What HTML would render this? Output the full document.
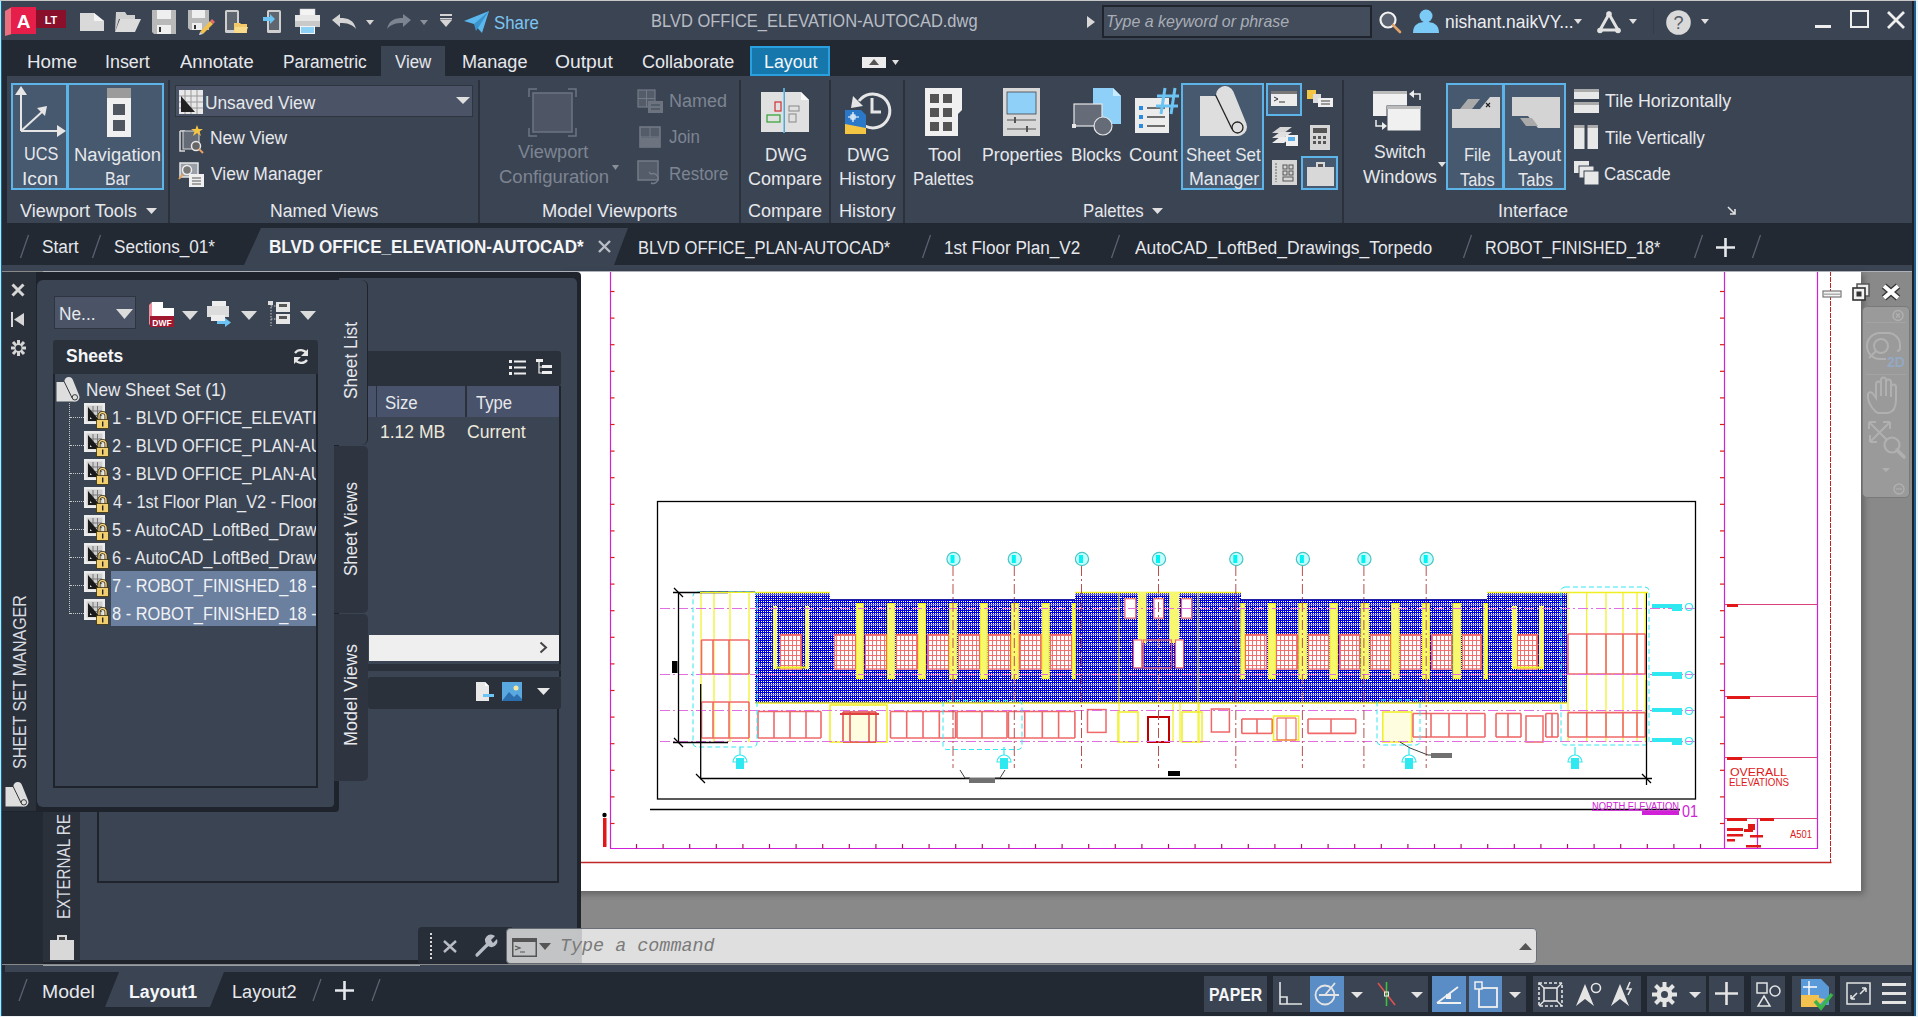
<!DOCTYPE html>
<html><head><meta charset="utf-8">
<style>
*{margin:0;padding:0;box-sizing:border-box}
html,body{width:1918px;height:1017px;overflow:hidden;background:#222933;font-family:"Liberation Sans",sans-serif;color:#eceef2}
.a{position:absolute}
.t{position:absolute;white-space:nowrap;transform-origin:0 0}
svg{overflow:visible}
</style></head><body>
<!-- p00_base -->
<div class="a" style="left:0px;top:0px;width:1918px;height:1017px;background:#222933;"></div>
<div class="a" style="left:0px;top:0px;width:1918px;height:1px;background:#c8c8c8;"></div>
<div class="a" style="left:2px;top:1px;width:1912px;height:39px;background:#3b4453;"></div>
<div class="a" style="left:2px;top:40px;width:1912px;height:36px;background:#222933;"></div>
<div class="a" style="left:7px;top:76px;width:1906px;height:147px;background:#3b4453;"></div>
<div class="a" style="left:2px;top:224px;width:1912px;height:41px;background:#222933;"></div>
<div class="a" style="left:2px;top:265px;width:1912px;height:6px;background:#3b4453;"></div>
<div class="a" style="left:2px;top:271px;width:1910px;height:694px;background:#898989;"></div>
<div class="a" style="left:560px;top:271px;width:1301px;height:620px;background:#fff;box-shadow:3px 3px 6px rgba(0,0,0,.28);"></div>
<div class="a" style="left:5px;top:965px;width:1907px;height:7px;background:#3b4453;"></div>
<div class="a" style="left:2px;top:972px;width:1912px;height:44px;background:#222933;"></div>
<div class="a" style="left:0px;top:1016px;width:1918px;height:1px;background:#eef2f4;"></div>
<div class="a" style="left:0px;top:1px;width:1px;height:1015px;background:#a8eefc;"></div>
<div class="a" style="left:1px;top:1px;width:1px;height:1015px;background:#1f5f8f;"></div>
<div class="a" style="left:1912px;top:1px;width:2px;height:1015px;background:#1c2129;"></div>
<div class="a" style="left:1914px;top:1px;width:2px;height:1015px;background:#1f5f8f;"></div>
<div class="a" style="left:1916px;top:0px;width:2px;height:1017px;background:#e8f4fa;"></div>
<!-- p05_drawing -->
<svg class="a" style="left:0;top:0" width="1918" height="1017" viewBox="0 0 1918 1017"><defs>
<pattern id="hatch" patternUnits="userSpaceOnUse" width="20" height="10"><rect width="20" height="10" fill="#0000d8"/><rect x="1" y="1" width="1" height="1" fill="#fff"/><rect x="1" y="3" width="1" height="1" fill="#fff"/><rect x="1" y="5" width="1" height="1" fill="#fff"/><rect x="1" y="7" width="1" height="1" fill="#fff"/><rect x="1" y="9" width="1" height="1" fill="#fff"/><rect x="3" y="1" width="1" height="1" fill="#fff"/><rect x="3" y="3" width="1" height="1" fill="#fff"/><rect x="3" y="5" width="1" height="1" fill="#fff"/><rect x="3" y="7" width="1" height="1" fill="#fff"/><rect x="3" y="9" width="1" height="1" fill="#fff"/><rect x="5" y="1" width="1" height="1" fill="#fff"/><rect x="5" y="3" width="1" height="1" fill="#fff"/><rect x="5" y="5" width="1" height="1" fill="#fff"/><rect x="5" y="7" width="1" height="1" fill="#fff"/><rect x="5" y="9" width="1" height="1" fill="#fff"/><rect x="7" y="1" width="1" height="1" fill="#fff"/><rect x="7" y="3" width="1" height="1" fill="#fff"/><rect x="7" y="5" width="1" height="1" fill="#fff"/><rect x="7" y="7" width="1" height="1" fill="#fff"/><rect x="7" y="9" width="1" height="1" fill="#fff"/><rect x="9" y="1" width="1" height="1" fill="#fff"/><rect x="9" y="3" width="1" height="1" fill="#fff"/><rect x="9" y="5" width="1" height="1" fill="#fff"/><rect x="9" y="7" width="1" height="1" fill="#fff"/><rect x="9" y="9" width="1" height="1" fill="#fff"/><rect x="11" y="1" width="1" height="1" fill="#fff"/><rect x="11" y="3" width="1" height="1" fill="#fff"/><rect x="11" y="5" width="1" height="1" fill="#fff"/><rect x="11" y="7" width="1" height="1" fill="#fff"/><rect x="11" y="9" width="1" height="1" fill="#fff"/><rect x="13" y="1" width="1" height="1" fill="#fff"/><rect x="13" y="3" width="1" height="1" fill="#fff"/><rect x="13" y="5" width="1" height="1" fill="#fff"/><rect x="13" y="7" width="1" height="1" fill="#fff"/><rect x="13" y="9" width="1" height="1" fill="#fff"/><rect x="15" y="1" width="1" height="1" fill="#fff"/><rect x="15" y="3" width="1" height="1" fill="#fff"/><rect x="15" y="5" width="1" height="1" fill="#fff"/><rect x="15" y="7" width="1" height="1" fill="#fff"/><rect x="15" y="9" width="1" height="1" fill="#fff"/><rect x="17" y="1" width="1" height="1" fill="#fff"/><rect x="17" y="3" width="1" height="1" fill="#fff"/><rect x="17" y="5" width="1" height="1" fill="#fff"/><rect x="17" y="7" width="1" height="1" fill="#fff"/><rect x="17" y="9" width="1" height="1" fill="#fff"/><rect x="19" y="1" width="1" height="1" fill="#fff"/><rect x="19" y="3" width="1" height="1" fill="#fff"/><rect x="19" y="5" width="1" height="1" fill="#fff"/><rect x="19" y="7" width="1" height="1" fill="#fff"/><rect x="19" y="9" width="1" height="1" fill="#fff"/><rect x="0" y="4" width="20" height="1" fill="#fff" opacity="0.45"/><rect x="9" y="1" width="2" height="1" fill="#fff"/><rect x="19" y="7" width="1" height="1" fill="#fff"/><rect x="0" y="7" width="1" height="1" fill="#fff"/></pattern>
<pattern id="grid" patternUnits="userSpaceOnUse" width="4" height="5"><rect width="4" height="5" fill="#fff"/><rect x="0" y="0" width="1" height="5" fill="#f07070"/><rect x="0" y="0" width="4" height="1" fill="#f07070"/></pattern>
<clipPath id="dclip"><rect x="2" y="271" width="1910" height="693"/></clipPath>
</defs><g clip-path="url(#dclip)"><line x1="610.5" y1="271" x2="610.5" y2="848.5" stroke="#d020d8" stroke-width="1.2"/>
<line x1="610" y1="848.5" x2="1818" y2="848.5" stroke="#d020d8" stroke-width="1.2"/>
<line x1="1724.5" y1="271" x2="1724.5" y2="848.5" stroke="#d020d8" stroke-width="1.2"/>
<line x1="1817.5" y1="271" x2="1817.5" y2="848.5" stroke="#d020d8" stroke-width="1.2"/>
<line x1="1830.5" y1="271" x2="1830.5" y2="862" stroke="#c82020" stroke-width="1" stroke-dasharray="5,1"/>
<line x1="581" y1="862.5" x2="1831.5" y2="862.5" stroke="#c02828" stroke-width="1.3"/>
<line x1="610.5" y1="291.5" x2="614.5" y2="291.5" stroke="#e01818" stroke-width="1.2"/>
<line x1="1720" y1="291.5" x2="1724.5" y2="291.5" stroke="#e01818" stroke-width="1.2"/>
<line x1="610.5" y1="318.1" x2="614.5" y2="318.1" stroke="#e01818" stroke-width="1.2"/>
<line x1="1720" y1="318.1" x2="1724.5" y2="318.1" stroke="#e01818" stroke-width="1.2"/>
<line x1="610.5" y1="344.7" x2="614.5" y2="344.7" stroke="#e01818" stroke-width="1.2"/>
<line x1="1720" y1="344.7" x2="1724.5" y2="344.7" stroke="#e01818" stroke-width="1.2"/>
<line x1="610.5" y1="371.3" x2="614.5" y2="371.3" stroke="#e01818" stroke-width="1.2"/>
<line x1="1720" y1="371.3" x2="1724.5" y2="371.3" stroke="#e01818" stroke-width="1.2"/>
<line x1="610.5" y1="397.9" x2="614.5" y2="397.9" stroke="#e01818" stroke-width="1.2"/>
<line x1="1720" y1="397.9" x2="1724.5" y2="397.9" stroke="#e01818" stroke-width="1.2"/>
<line x1="610.5" y1="424.5" x2="614.5" y2="424.5" stroke="#e01818" stroke-width="1.2"/>
<line x1="1720" y1="424.5" x2="1724.5" y2="424.5" stroke="#e01818" stroke-width="1.2"/>
<line x1="610.5" y1="451.1" x2="614.5" y2="451.1" stroke="#e01818" stroke-width="1.2"/>
<line x1="1720" y1="451.1" x2="1724.5" y2="451.1" stroke="#e01818" stroke-width="1.2"/>
<line x1="610.5" y1="477.70000000000005" x2="614.5" y2="477.70000000000005" stroke="#e01818" stroke-width="1.2"/>
<line x1="1720" y1="477.70000000000005" x2="1724.5" y2="477.70000000000005" stroke="#e01818" stroke-width="1.2"/>
<line x1="610.5" y1="504.3" x2="614.5" y2="504.3" stroke="#e01818" stroke-width="1.2"/>
<line x1="1720" y1="504.3" x2="1724.5" y2="504.3" stroke="#e01818" stroke-width="1.2"/>
<line x1="610.5" y1="530.9" x2="614.5" y2="530.9" stroke="#e01818" stroke-width="1.2"/>
<line x1="1720" y1="530.9" x2="1724.5" y2="530.9" stroke="#e01818" stroke-width="1.2"/>
<line x1="610.5" y1="557.5" x2="614.5" y2="557.5" stroke="#e01818" stroke-width="1.2"/>
<line x1="1720" y1="557.5" x2="1724.5" y2="557.5" stroke="#e01818" stroke-width="1.2"/>
<line x1="610.5" y1="584.1" x2="614.5" y2="584.1" stroke="#e01818" stroke-width="1.2"/>
<line x1="1720" y1="584.1" x2="1724.5" y2="584.1" stroke="#e01818" stroke-width="1.2"/>
<line x1="610.5" y1="610.7" x2="614.5" y2="610.7" stroke="#e01818" stroke-width="1.2"/>
<line x1="1720" y1="610.7" x2="1724.5" y2="610.7" stroke="#e01818" stroke-width="1.2"/>
<line x1="610.5" y1="637.3" x2="614.5" y2="637.3" stroke="#e01818" stroke-width="1.2"/>
<line x1="1720" y1="637.3" x2="1724.5" y2="637.3" stroke="#e01818" stroke-width="1.2"/>
<line x1="610.5" y1="663.9000000000001" x2="614.5" y2="663.9000000000001" stroke="#e01818" stroke-width="1.2"/>
<line x1="1720" y1="663.9000000000001" x2="1724.5" y2="663.9000000000001" stroke="#e01818" stroke-width="1.2"/>
<line x1="610.5" y1="690.5" x2="614.5" y2="690.5" stroke="#e01818" stroke-width="1.2"/>
<line x1="1720" y1="690.5" x2="1724.5" y2="690.5" stroke="#e01818" stroke-width="1.2"/>
<line x1="610.5" y1="717.1" x2="614.5" y2="717.1" stroke="#e01818" stroke-width="1.2"/>
<line x1="1720" y1="717.1" x2="1724.5" y2="717.1" stroke="#e01818" stroke-width="1.2"/>
<line x1="610.5" y1="743.7" x2="614.5" y2="743.7" stroke="#e01818" stroke-width="1.2"/>
<line x1="1720" y1="743.7" x2="1724.5" y2="743.7" stroke="#e01818" stroke-width="1.2"/>
<line x1="610.5" y1="770.3" x2="614.5" y2="770.3" stroke="#e01818" stroke-width="1.2"/>
<line x1="1720" y1="770.3" x2="1724.5" y2="770.3" stroke="#e01818" stroke-width="1.2"/>
<line x1="610.5" y1="796.9000000000001" x2="614.5" y2="796.9000000000001" stroke="#e01818" stroke-width="1.2"/>
<line x1="1720" y1="796.9000000000001" x2="1724.5" y2="796.9000000000001" stroke="#e01818" stroke-width="1.2"/>
<line x1="610.5" y1="823.5" x2="614.5" y2="823.5" stroke="#e01818" stroke-width="1.2"/>
<line x1="1720" y1="823.5" x2="1724.5" y2="823.5" stroke="#e01818" stroke-width="1.2"/>
<line x1="636.5" y1="844" x2="636.5" y2="848.5" stroke="#b01060" stroke-width="1.2"/>
<line x1="663.1" y1="844" x2="663.1" y2="848.5" stroke="#b01060" stroke-width="1.2"/>
<line x1="689.7" y1="844" x2="689.7" y2="848.5" stroke="#b01060" stroke-width="1.2"/>
<line x1="716.3" y1="844" x2="716.3" y2="848.5" stroke="#b01060" stroke-width="1.2"/>
<line x1="742.9" y1="844" x2="742.9" y2="848.5" stroke="#b01060" stroke-width="1.2"/>
<line x1="769.5" y1="844" x2="769.5" y2="848.5" stroke="#b01060" stroke-width="1.2"/>
<line x1="796.1" y1="844" x2="796.1" y2="848.5" stroke="#b01060" stroke-width="1.2"/>
<line x1="822.7" y1="844" x2="822.7" y2="848.5" stroke="#b01060" stroke-width="1.2"/>
<line x1="849.3" y1="844" x2="849.3" y2="848.5" stroke="#b01060" stroke-width="1.2"/>
<line x1="875.9" y1="844" x2="875.9" y2="848.5" stroke="#b01060" stroke-width="1.2"/>
<line x1="902.5" y1="844" x2="902.5" y2="848.5" stroke="#b01060" stroke-width="1.2"/>
<line x1="929.1" y1="844" x2="929.1" y2="848.5" stroke="#b01060" stroke-width="1.2"/>
<line x1="955.7" y1="844" x2="955.7" y2="848.5" stroke="#b01060" stroke-width="1.2"/>
<line x1="982.3" y1="844" x2="982.3" y2="848.5" stroke="#b01060" stroke-width="1.2"/>
<line x1="1008.9000000000001" y1="844" x2="1008.9000000000001" y2="848.5" stroke="#b01060" stroke-width="1.2"/>
<line x1="1035.5" y1="844" x2="1035.5" y2="848.5" stroke="#b01060" stroke-width="1.2"/>
<line x1="1062.1" y1="844" x2="1062.1" y2="848.5" stroke="#b01060" stroke-width="1.2"/>
<line x1="1088.7" y1="844" x2="1088.7" y2="848.5" stroke="#b01060" stroke-width="1.2"/>
<line x1="1115.3" y1="844" x2="1115.3" y2="848.5" stroke="#b01060" stroke-width="1.2"/>
<line x1="1141.9" y1="844" x2="1141.9" y2="848.5" stroke="#b01060" stroke-width="1.2"/>
<line x1="1168.5" y1="844" x2="1168.5" y2="848.5" stroke="#b01060" stroke-width="1.2"/>
<line x1="1195.1" y1="844" x2="1195.1" y2="848.5" stroke="#b01060" stroke-width="1.2"/>
<line x1="1221.7" y1="844" x2="1221.7" y2="848.5" stroke="#b01060" stroke-width="1.2"/>
<line x1="1248.3000000000002" y1="844" x2="1248.3000000000002" y2="848.5" stroke="#b01060" stroke-width="1.2"/>
<line x1="1274.9" y1="844" x2="1274.9" y2="848.5" stroke="#b01060" stroke-width="1.2"/>
<line x1="1301.5" y1="844" x2="1301.5" y2="848.5" stroke="#b01060" stroke-width="1.2"/>
<line x1="1328.1" y1="844" x2="1328.1" y2="848.5" stroke="#b01060" stroke-width="1.2"/>
<line x1="1354.7" y1="844" x2="1354.7" y2="848.5" stroke="#b01060" stroke-width="1.2"/>
<line x1="1381.3000000000002" y1="844" x2="1381.3000000000002" y2="848.5" stroke="#b01060" stroke-width="1.2"/>
<line x1="1407.9" y1="844" x2="1407.9" y2="848.5" stroke="#b01060" stroke-width="1.2"/>
<line x1="1434.5" y1="844" x2="1434.5" y2="848.5" stroke="#b01060" stroke-width="1.2"/>
<line x1="1461.1" y1="844" x2="1461.1" y2="848.5" stroke="#b01060" stroke-width="1.2"/>
<line x1="1487.7" y1="844" x2="1487.7" y2="848.5" stroke="#b01060" stroke-width="1.2"/>
<line x1="1514.3000000000002" y1="844" x2="1514.3000000000002" y2="848.5" stroke="#b01060" stroke-width="1.2"/>
<line x1="1540.9" y1="844" x2="1540.9" y2="848.5" stroke="#b01060" stroke-width="1.2"/>
<line x1="1567.5" y1="844" x2="1567.5" y2="848.5" stroke="#b01060" stroke-width="1.2"/>
<line x1="1594.1" y1="844" x2="1594.1" y2="848.5" stroke="#b01060" stroke-width="1.2"/>
<line x1="1620.7" y1="844" x2="1620.7" y2="848.5" stroke="#b01060" stroke-width="1.2"/>
<line x1="1647.3000000000002" y1="844" x2="1647.3000000000002" y2="848.5" stroke="#b01060" stroke-width="1.2"/>
<line x1="1673.9" y1="844" x2="1673.9" y2="848.5" stroke="#b01060" stroke-width="1.2"/>
<line x1="1700.5" y1="844" x2="1700.5" y2="848.5" stroke="#b01060" stroke-width="1.2"/>
<line x1="1724.5" y1="604.5" x2="1817.5" y2="604.5" stroke="#d84080" stroke-width="1.2"/>
<line x1="1724.5" y1="696.5" x2="1817.5" y2="696.5" stroke="#d84080" stroke-width="1.2"/>
<line x1="1724.5" y1="757.5" x2="1817.5" y2="757.5" stroke="#d84080" stroke-width="1.2"/>
<line x1="1724.5" y1="818.5" x2="1817.5" y2="818.5" stroke="#d84080" stroke-width="1.2"/>
<rect x="1727" y="604" width="11" height="3" fill="#e01818" />
<rect x="1727" y="696" width="23" height="3" fill="#e01818" />
<rect x="1727" y="757" width="15" height="3" fill="#e01818" />
<rect x="1727" y="818" width="20" height="3" fill="#e01818" />
<rect x="1760" y="818" width="14" height="3" fill="#e01818" />
<line x1="1757.5" y1="818.5" x2="1757.5" y2="848.5" stroke="#d020d8" stroke-width="1.2"/>
<rect x="1748" y="824" width="7" height="6" fill="#e01818" />
<rect x="1727" y="828" width="16" height="3" fill="#e01818" />
<rect x="1744" y="829" width="9" height="3" fill="#e01818" />
<rect x="1727" y="834" width="16" height="2.5" fill="#e01818" />
<rect x="1750" y="835" width="13" height="2.5" fill="#e01818" />
<rect x="1727" y="839" width="8" height="2.5" fill="#e01818" />
<rect x="1746" y="845" width="15" height="2.5" fill="#e01818" />
<text x="1730" y="775.5" font-family="Liberation Sans" font-size="10.5" fill="#e01818" textLength="57" lengthAdjust="spacingAndGlyphs">OVERALL</text>
<text x="1729" y="785.5" font-family="Liberation Sans" font-size="10.5" fill="#e01818" textLength="60" lengthAdjust="spacingAndGlyphs">ELEVATIONS</text>
<text x="1790" y="838" font-family="Liberation Sans" font-size="10" fill="#e01818" textLength="22" lengthAdjust="spacingAndGlyphs">A501</text>
<rect x="603" y="818" width="3.5" height="29" fill="#e01818" />
<circle cx="604.5" cy="815" r="2.2" fill="#000"/>
<rect x="657.5" y="501.5" width="1038" height="297.5" fill="none" stroke="#000" stroke-width="1.3" />
<line x1="650" y1="809.5" x2="1680" y2="809.5" stroke="#000" stroke-width="1.3"/>
<text x="1592" y="810" font-family="Liberation Sans" font-size="10" fill="#d020d8" textLength="87" lengthAdjust="spacingAndGlyphs">NORTH ELEVATION</text>
<line x1="1592" y1="810.5" x2="1680" y2="810.5" stroke="#d020d8" stroke-width="0.8"/>
<rect x="1642" y="811" width="37" height="4" fill="#d020d8" />
<text x="1682" y="817" font-family="Liberation Sans" font-size="16" fill="#d020d8" textLength="16" lengthAdjust="spacingAndGlyphs">01</text>
<rect x="700.5" y="592" width="55" height="150" fill="#fff" />
<rect x="1567" y="592" width="81" height="150" fill="#fff" />
<rect x="755" y="703" width="812" height="39" fill="#fff" />
<rect x="755" y="592" width="75" height="111" fill="url(#hatch)" />
<rect x="830" y="599" width="245" height="104" fill="url(#hatch)" />
<rect x="1075" y="592" width="166" height="111" fill="url(#hatch)" />
<rect x="1241" y="599" width="246" height="104" fill="url(#hatch)" />
<rect x="1487" y="592" width="80" height="111" fill="url(#hatch)" />
<line x1="755" y1="592.5" x2="830" y2="592.5" stroke="#f0f020" stroke-width="1.5"/>
<line x1="1075" y1="592.5" x2="1241" y2="592.5" stroke="#f0f020" stroke-width="1.5"/>
<line x1="1487" y1="592.5" x2="1567" y2="592.5" stroke="#f0f020" stroke-width="1.5"/>
<line x1="830" y1="599.5" x2="1075" y2="599.5" stroke="#2020a0" stroke-width="1.2"/>
<line x1="1241" y1="599.5" x2="1487" y2="599.5" stroke="#2020a0" stroke-width="1.2"/>
<line x1="755" y1="703" x2="1567" y2="703" stroke="#f0f020" stroke-width="1.5"/>
<rect x="834" y="634" width="22" height="35.5" fill="#fff" />
<rect x="834" y="634" width="22" height="35.5" fill="url(#grid)"/>
<rect x="834.5" y="634.5" width="21" height="34.5" fill="none" stroke="#f06868" stroke-width="1.2" />
<rect x="865" y="634" width="22" height="35.5" fill="#fff" />
<rect x="865" y="634" width="22" height="35.5" fill="url(#grid)"/>
<rect x="865.5" y="634.5" width="21" height="34.5" fill="none" stroke="#f06868" stroke-width="1.2" />
<rect x="896" y="634" width="22" height="35.5" fill="#fff" />
<rect x="896" y="634" width="22" height="35.5" fill="url(#grid)"/>
<rect x="896.5" y="634.5" width="21" height="34.5" fill="none" stroke="#f06868" stroke-width="1.2" />
<rect x="927" y="634" width="22" height="35.5" fill="#fff" />
<rect x="927" y="634" width="22" height="35.5" fill="url(#grid)"/>
<rect x="927.5" y="634.5" width="21" height="34.5" fill="none" stroke="#f06868" stroke-width="1.2" />
<rect x="958" y="634" width="22" height="35.5" fill="#fff" />
<rect x="958" y="634" width="22" height="35.5" fill="url(#grid)"/>
<rect x="958.5" y="634.5" width="21" height="34.5" fill="none" stroke="#f06868" stroke-width="1.2" />
<rect x="988" y="634" width="23" height="35.5" fill="#fff" />
<rect x="988" y="634" width="23" height="35.5" fill="url(#grid)"/>
<rect x="988.5" y="634.5" width="22" height="34.5" fill="none" stroke="#f06868" stroke-width="1.2" />
<rect x="1019" y="634" width="23" height="35.5" fill="#fff" />
<rect x="1019" y="634" width="23" height="35.5" fill="url(#grid)"/>
<rect x="1019.5" y="634.5" width="22" height="34.5" fill="none" stroke="#f06868" stroke-width="1.2" />
<rect x="1050" y="634" width="22" height="35.5" fill="#fff" />
<rect x="1050" y="634" width="22" height="35.5" fill="url(#grid)"/>
<rect x="1050.5" y="634.5" width="21" height="34.5" fill="none" stroke="#f06868" stroke-width="1.2" />
<rect x="1245" y="634" width="22" height="35.5" fill="#fff" />
<rect x="1245" y="634" width="22" height="35.5" fill="url(#grid)"/>
<rect x="1245.5" y="634.5" width="21" height="34.5" fill="none" stroke="#f06868" stroke-width="1.2" />
<rect x="1276" y="634" width="22" height="35.5" fill="#fff" />
<rect x="1276" y="634" width="22" height="35.5" fill="url(#grid)"/>
<rect x="1276.5" y="634.5" width="21" height="34.5" fill="none" stroke="#f06868" stroke-width="1.2" />
<rect x="1308" y="634" width="21" height="35.5" fill="#fff" />
<rect x="1308" y="634" width="21" height="35.5" fill="url(#grid)"/>
<rect x="1308.5" y="634.5" width="20" height="34.5" fill="none" stroke="#f06868" stroke-width="1.2" />
<rect x="1339" y="634" width="21" height="35.5" fill="#fff" />
<rect x="1339" y="634" width="21" height="35.5" fill="url(#grid)"/>
<rect x="1339.5" y="634.5" width="20" height="34.5" fill="none" stroke="#f06868" stroke-width="1.2" />
<rect x="1370" y="634" width="21" height="35.5" fill="#fff" />
<rect x="1370" y="634" width="21" height="35.5" fill="url(#grid)"/>
<rect x="1370.5" y="634.5" width="20" height="34.5" fill="none" stroke="#f06868" stroke-width="1.2" />
<rect x="1400" y="634" width="21" height="35.5" fill="#fff" />
<rect x="1400" y="634" width="21" height="35.5" fill="url(#grid)"/>
<rect x="1400.5" y="634.5" width="20" height="34.5" fill="none" stroke="#f06868" stroke-width="1.2" />
<rect x="1431" y="634" width="21" height="35.5" fill="#fff" />
<rect x="1431" y="634" width="21" height="35.5" fill="url(#grid)"/>
<rect x="1431.5" y="634.5" width="20" height="34.5" fill="none" stroke="#f06868" stroke-width="1.2" />
<rect x="1462" y="634" width="20" height="35.5" fill="#fff" />
<rect x="1462" y="634" width="20" height="35.5" fill="url(#grid)"/>
<rect x="1462.5" y="634.5" width="19" height="34.5" fill="none" stroke="#f06868" stroke-width="1.2" />
<rect x="780" y="634" width="22" height="35.5" fill="#fff" />
<rect x="780" y="634" width="22" height="35.5" fill="url(#grid)"/>
<rect x="780.5" y="634.5" width="21" height="34.5" fill="none" stroke="#f06868" stroke-width="1.2" />
<rect x="1517" y="634" width="21" height="35.5" fill="#fff" />
<rect x="1517" y="634" width="21" height="35.5" fill="url(#grid)"/>
<rect x="1517.5" y="634.5" width="20" height="34.5" fill="none" stroke="#f06868" stroke-width="1.2" />
<rect x="856" y="603" width="7.5" height="76" fill="#f8f870" />
<rect x="856.5" y="603.5" width="6.5" height="75" fill="none" stroke="#f0f020" stroke-width="1" />
<rect x="887" y="603" width="8" height="76" fill="#f8f870" />
<rect x="887.5" y="603.5" width="7" height="75" fill="none" stroke="#f0f020" stroke-width="1" />
<rect x="918" y="603" width="8" height="76" fill="#f8f870" />
<rect x="918.5" y="603.5" width="7" height="75" fill="none" stroke="#f0f020" stroke-width="1" />
<rect x="949.3" y="603" width="7.7000000000000455" height="76" fill="#f8f870" />
<rect x="949.8" y="603.5" width="6.7000000000000455" height="75" fill="none" stroke="#f0f020" stroke-width="1" />
<rect x="980" y="603" width="7.5" height="76" fill="#f8f870" />
<rect x="980.5" y="603.5" width="6.5" height="75" fill="none" stroke="#f0f020" stroke-width="1" />
<rect x="1011" y="603" width="7.7000000000000455" height="76" fill="#f8f870" />
<rect x="1011.5" y="603.5" width="6.7000000000000455" height="75" fill="none" stroke="#f0f020" stroke-width="1" />
<rect x="1041.8" y="603" width="7.600000000000136" height="76" fill="#f8f870" />
<rect x="1042.3" y="603.5" width="6.600000000000136" height="75" fill="none" stroke="#f0f020" stroke-width="1" />
<rect x="1072" y="603" width="3.5" height="76" fill="#f8f870" />
<rect x="1072.5" y="603.5" width="2.5" height="75" fill="none" stroke="#f0f020" stroke-width="1" />
<rect x="1268" y="603" width="8" height="76" fill="#f8f870" />
<rect x="1268.5" y="603.5" width="7" height="75" fill="none" stroke="#f0f020" stroke-width="1" />
<rect x="1298.5" y="603" width="8.5" height="76" fill="#f8f870" />
<rect x="1299.0" y="603.5" width="7.5" height="75" fill="none" stroke="#f0f020" stroke-width="1" />
<rect x="1329.7" y="603" width="8.0" height="76" fill="#f8f870" />
<rect x="1330.2" y="603.5" width="7.0" height="75" fill="none" stroke="#f0f020" stroke-width="1" />
<rect x="1360.7" y="603" width="8.299999999999955" height="76" fill="#f8f870" />
<rect x="1361.2" y="603.5" width="7.2999999999999545" height="75" fill="none" stroke="#f0f020" stroke-width="1" />
<rect x="1391" y="603" width="8.299999999999955" height="76" fill="#f8f870" />
<rect x="1391.5" y="603.5" width="7.2999999999999545" height="75" fill="none" stroke="#f0f020" stroke-width="1" />
<rect x="1422" y="603" width="7.7000000000000455" height="76" fill="#f8f870" />
<rect x="1422.5" y="603.5" width="6.7000000000000455" height="75" fill="none" stroke="#f0f020" stroke-width="1" />
<rect x="1452.7" y="603" width="8.299999999999955" height="76" fill="#f8f870" />
<rect x="1453.2" y="603.5" width="7.2999999999999545" height="75" fill="none" stroke="#f0f020" stroke-width="1" />
<rect x="1483.6" y="603" width="4.400000000000091" height="76" fill="#f8f870" />
<rect x="1484.1" y="603.5" width="3.400000000000091" height="75" fill="none" stroke="#f0f020" stroke-width="1" />
<rect x="1240.5" y="603" width="4.5" height="76" fill="#f8f870" />
<rect x="1241.0" y="603.5" width="3.5" height="75" fill="none" stroke="#f0f020" stroke-width="1" />
<rect x="773" y="606" width="4" height="63" fill="#f8f870" />
<rect x="805" y="606" width="4" height="63" fill="#f8f870" />
<rect x="1512" y="606" width="5" height="63" fill="#f8f870" />
<rect x="1539" y="606" width="5" height="63" fill="#f8f870" />
<line x1="776" y1="667.5" x2="806" y2="667.5" stroke="#f0f020" stroke-width="2"/>
<line x1="1513" y1="667.5" x2="1543" y2="667.5" stroke="#f0f020" stroke-width="2"/>
<rect x="1124.4" y="598.2" width="11.799999999999955" height="20.4" fill="#fff" />
<rect x="1124.9" y="598.7" width="10.799999999999955" height="19.4" fill="none" stroke="#f06868" stroke-width="1.2" />
<rect x="1153.4" y="598.2" width="10.599999999999909" height="20.4" fill="#fff" />
<rect x="1153.9" y="598.7" width="9.599999999999909" height="19.4" fill="none" stroke="#f06868" stroke-width="1.2" />
<rect x="1181" y="598.2" width="11.200000000000045" height="20.4" fill="#fff" />
<rect x="1181.5" y="598.7" width="10.200000000000045" height="19.4" fill="none" stroke="#f06868" stroke-width="1.2" />
<rect x="1138" y="592" width="8.5" height="51" fill="#f8f870" />
<rect x="1169.3" y="592" width="9.900000000000091" height="51" fill="#f8f870" />
<rect x="1133" y="639.5" width="9.3" height="28.8" fill="#fff" />
<rect x="1133.5" y="640" width="8.3" height="27.8" fill="none" stroke="#f06868" stroke-width="1.2" />
<rect x="1175" y="639.5" width="9" height="28.8" fill="#fff" />
<rect x="1175.5" y="640" width="8" height="27.8" fill="none" stroke="#f06868" stroke-width="1.2" />
<rect x="1143.5" y="640" width="28" height="28" fill="none" stroke="#f06868" stroke-width="1.2" />
<line x1="701" y1="592" x2="701" y2="742" stroke="#f0f020" stroke-width="1.2"/>
<line x1="714" y1="592" x2="714" y2="742" stroke="#f0f020" stroke-width="1.2"/>
<line x1="730" y1="592" x2="730" y2="742" stroke="#f0f020" stroke-width="1.2"/>
<line x1="749" y1="592" x2="749" y2="742" stroke="#f0f020" stroke-width="1.2"/>
<line x1="701.5" y1="640" x2="749" y2="640" stroke="#f06868" stroke-width="1.6"/>
<line x1="701.5" y1="674" x2="749" y2="674" stroke="#f06868" stroke-width="1.6"/>
<line x1="701.5" y1="640" x2="701.5" y2="674" stroke="#f06868" stroke-width="1.6"/>
<line x1="713" y1="640" x2="713" y2="674" stroke="#f06868" stroke-width="1.6"/>
<line x1="729" y1="640" x2="729" y2="674" stroke="#f06868" stroke-width="1.6"/>
<line x1="749" y1="640" x2="749" y2="674" stroke="#f06868" stroke-width="1.6"/>
<line x1="701.5" y1="702" x2="749" y2="702" stroke="#f06868" stroke-width="1.6"/>
<line x1="701.5" y1="738" x2="749" y2="738" stroke="#f06868" stroke-width="1.6"/>
<line x1="701.5" y1="702" x2="701.5" y2="738" stroke="#f06868" stroke-width="1.6"/>
<line x1="713" y1="702" x2="713" y2="738" stroke="#f06868" stroke-width="1.6"/>
<line x1="729" y1="702" x2="729" y2="738" stroke="#f06868" stroke-width="1.6"/>
<line x1="749" y1="702" x2="749" y2="738" stroke="#f06868" stroke-width="1.6"/>
<line x1="700" y1="592" x2="755" y2="592" stroke="#202020" stroke-width="1"/>
<line x1="1568" y1="592" x2="1568" y2="742" stroke="#f0f020" stroke-width="1.2"/>
<line x1="1586.7" y1="592" x2="1586.7" y2="742" stroke="#f0f020" stroke-width="1.2"/>
<line x1="1606" y1="592" x2="1606" y2="742" stroke="#f0f020" stroke-width="1.2"/>
<line x1="1623" y1="592" x2="1623" y2="742" stroke="#f0f020" stroke-width="1.2"/>
<line x1="1637" y1="592" x2="1637" y2="742" stroke="#f0f020" stroke-width="1.2"/>
<line x1="1645.3" y1="592" x2="1645.3" y2="742" stroke="#f0f020" stroke-width="1.2"/>
<line x1="1568" y1="634" x2="1645.3" y2="634" stroke="#f06868" stroke-width="1.6"/>
<line x1="1568" y1="674" x2="1645.3" y2="674" stroke="#f06868" stroke-width="1.6"/>
<line x1="1568" y1="634" x2="1568" y2="674" stroke="#f06868" stroke-width="1.6"/>
<line x1="1586.7" y1="634" x2="1586.7" y2="674" stroke="#f06868" stroke-width="1.6"/>
<line x1="1606" y1="634" x2="1606" y2="674" stroke="#f06868" stroke-width="1.6"/>
<line x1="1623" y1="634" x2="1623" y2="674" stroke="#f06868" stroke-width="1.6"/>
<line x1="1637" y1="634" x2="1637" y2="674" stroke="#f06868" stroke-width="1.6"/>
<line x1="1645.3" y1="634" x2="1645.3" y2="674" stroke="#f06868" stroke-width="1.6"/>
<line x1="1568" y1="712.6" x2="1645.3" y2="712.6" stroke="#f06868" stroke-width="1.6"/>
<line x1="1568" y1="737" x2="1645.3" y2="737" stroke="#f06868" stroke-width="1.6"/>
<line x1="1568" y1="712.6" x2="1568" y2="737" stroke="#f06868" stroke-width="1.6"/>
<line x1="1586.7" y1="712.6" x2="1586.7" y2="737" stroke="#f06868" stroke-width="1.6"/>
<line x1="1606" y1="712.6" x2="1606" y2="737" stroke="#f06868" stroke-width="1.6"/>
<line x1="1623" y1="712.6" x2="1623" y2="737" stroke="#f06868" stroke-width="1.6"/>
<line x1="1637" y1="712.6" x2="1637" y2="737" stroke="#f06868" stroke-width="1.6"/>
<line x1="1645.3" y1="712.6" x2="1645.3" y2="737" stroke="#f06868" stroke-width="1.6"/>
<line x1="758" y1="711.5" x2="821" y2="711.5" stroke="#f06868" stroke-width="1.6"/>
<line x1="758" y1="738" x2="821" y2="738" stroke="#f06868" stroke-width="1.6"/>
<line x1="758" y1="711.5" x2="758" y2="738" stroke="#f06868" stroke-width="1.6"/>
<line x1="774" y1="711.5" x2="774" y2="738" stroke="#f06868" stroke-width="1.6"/>
<line x1="790" y1="711.5" x2="790" y2="738" stroke="#f06868" stroke-width="1.6"/>
<line x1="806" y1="711.5" x2="806" y2="738" stroke="#f06868" stroke-width="1.6"/>
<line x1="821" y1="711.5" x2="821" y2="738" stroke="#f06868" stroke-width="1.6"/>
<rect x="830" y="705" width="57" height="37" fill="none" stroke="#f0f020" stroke-width="1.5" />
<rect x="843" y="712" width="33" height="30" fill="#fffde0" />
<line x1="843" y1="712" x2="876" y2="712" stroke="#e04040" stroke-width="1.4"/>
<line x1="843" y1="742" x2="876" y2="742" stroke="#e04040" stroke-width="1.4"/>
<line x1="843" y1="712" x2="843" y2="742" stroke="#e04040" stroke-width="1.4"/>
<line x1="850" y1="712" x2="850" y2="742" stroke="#e04040" stroke-width="1.4"/>
<line x1="869" y1="712" x2="869" y2="742" stroke="#e04040" stroke-width="1.4"/>
<line x1="876" y1="712" x2="876" y2="742" stroke="#e04040" stroke-width="1.4"/>
<line x1="840" y1="714" x2="879" y2="714" stroke="#e04040" stroke-width="2"/>
<line x1="890.5" y1="711.5" x2="955.6" y2="711.5" stroke="#f06868" stroke-width="1.6"/>
<line x1="890.5" y1="738" x2="955.6" y2="738" stroke="#f06868" stroke-width="1.6"/>
<line x1="890.5" y1="711.5" x2="890.5" y2="738" stroke="#f06868" stroke-width="1.6"/>
<line x1="906.7" y1="711.5" x2="906.7" y2="738" stroke="#f06868" stroke-width="1.6"/>
<line x1="923" y1="711.5" x2="923" y2="738" stroke="#f06868" stroke-width="1.6"/>
<line x1="939.3" y1="711.5" x2="939.3" y2="738" stroke="#f06868" stroke-width="1.6"/>
<line x1="955.6" y1="711.5" x2="955.6" y2="738" stroke="#f06868" stroke-width="1.6"/>
<line x1="957" y1="711.5" x2="1007" y2="711.5" stroke="#f06868" stroke-width="1.6"/>
<line x1="957" y1="738" x2="1007" y2="738" stroke="#f06868" stroke-width="1.6"/>
<line x1="957" y1="711.5" x2="957" y2="738" stroke="#f06868" stroke-width="1.6"/>
<line x1="982" y1="711.5" x2="982" y2="738" stroke="#f06868" stroke-width="1.6"/>
<line x1="1007" y1="711.5" x2="1007" y2="738" stroke="#f06868" stroke-width="1.6"/>
<line x1="1008.4" y1="711.5" x2="1074.9" y2="711.5" stroke="#f06868" stroke-width="1.6"/>
<line x1="1008.4" y1="738" x2="1074.9" y2="738" stroke="#f06868" stroke-width="1.6"/>
<line x1="1008.4" y1="711.5" x2="1008.4" y2="738" stroke="#f06868" stroke-width="1.6"/>
<line x1="1024.7" y1="711.5" x2="1024.7" y2="738" stroke="#f06868" stroke-width="1.6"/>
<line x1="1042.3" y1="711.5" x2="1042.3" y2="738" stroke="#f06868" stroke-width="1.6"/>
<line x1="1058.6" y1="711.5" x2="1058.6" y2="738" stroke="#f06868" stroke-width="1.6"/>
<line x1="1074.9" y1="711.5" x2="1074.9" y2="738" stroke="#f06868" stroke-width="1.6"/>
<rect x="1087.5" y="709.6" width="18.5" height="22.8" fill="none" stroke="#f06868" stroke-width="1.5" />
<rect x="1118" y="712" width="20" height="30" fill="none" stroke="#f0f020" stroke-width="1.5" />
<rect x="1182" y="712" width="20" height="30" fill="none" stroke="#f0f020" stroke-width="1.5" />
<rect x="1148" y="717" width="21" height="25" fill="none" stroke="#c00000" stroke-width="2" />
<rect x="1211.4" y="709" width="18" height="23" fill="none" stroke="#f06868" stroke-width="1.5" />
<line x1="1173" y1="703" x2="1173" y2="742" stroke="#f0f020" stroke-width="1.2"/>
<line x1="1180" y1="703" x2="1180" y2="742" stroke="#f0f020" stroke-width="1.2"/>
<line x1="1199" y1="703" x2="1199" y2="742" stroke="#f0f020" stroke-width="1.2"/>
<line x1="1241.8" y1="719" x2="1272.2" y2="719" stroke="#f06868" stroke-width="1.6"/>
<line x1="1241.8" y1="733.4" x2="1272.2" y2="733.4" stroke="#f06868" stroke-width="1.6"/>
<line x1="1241.8" y1="719" x2="1241.8" y2="733.4" stroke="#f06868" stroke-width="1.6"/>
<line x1="1257" y1="719" x2="1257" y2="733.4" stroke="#f06868" stroke-width="1.6"/>
<line x1="1272.2" y1="719" x2="1272.2" y2="733.4" stroke="#f06868" stroke-width="1.6"/>
<rect x="1273.6" y="716" width="25" height="24" fill="none" stroke="#f0f020" stroke-width="1.5" />
<line x1="1277" y1="718" x2="1296" y2="718" stroke="#f06868" stroke-width="1.2"/>
<line x1="1277" y1="740" x2="1296" y2="740" stroke="#f06868" stroke-width="1.2"/>
<line x1="1277" y1="718" x2="1277" y2="740" stroke="#f06868" stroke-width="1.2"/>
<line x1="1286" y1="718" x2="1286" y2="740" stroke="#f06868" stroke-width="1.2"/>
<line x1="1296" y1="718" x2="1296" y2="740" stroke="#f06868" stroke-width="1.2"/>
<line x1="1308" y1="719" x2="1355.7" y2="719" stroke="#f06868" stroke-width="1.6"/>
<line x1="1308" y1="733.4" x2="1355.7" y2="733.4" stroke="#f06868" stroke-width="1.6"/>
<line x1="1308" y1="719" x2="1308" y2="733.4" stroke="#f06868" stroke-width="1.6"/>
<line x1="1331" y1="719" x2="1331" y2="733.4" stroke="#f06868" stroke-width="1.6"/>
<line x1="1355.7" y1="719" x2="1355.7" y2="733.4" stroke="#f06868" stroke-width="1.6"/>
<rect x="1382.8" y="712" width="29" height="30" fill="#fffde0" />
<rect x="1382.8" y="712" width="29" height="30" fill="none" stroke="#f0f020" stroke-width="1.5" />
<line x1="1413" y1="713.5" x2="1485" y2="713.5" stroke="#f06868" stroke-width="1.6"/>
<line x1="1413" y1="737" x2="1485" y2="737" stroke="#f06868" stroke-width="1.6"/>
<line x1="1413" y1="713.5" x2="1413" y2="737" stroke="#f06868" stroke-width="1.6"/>
<line x1="1431" y1="713.5" x2="1431" y2="737" stroke="#f06868" stroke-width="1.6"/>
<line x1="1449" y1="713.5" x2="1449" y2="737" stroke="#f06868" stroke-width="1.6"/>
<line x1="1467" y1="713.5" x2="1467" y2="737" stroke="#f06868" stroke-width="1.6"/>
<line x1="1485" y1="713.5" x2="1485" y2="737" stroke="#f06868" stroke-width="1.6"/>
<line x1="1496" y1="713.5" x2="1521" y2="713.5" stroke="#f06868" stroke-width="1.6"/>
<line x1="1496" y1="737" x2="1521" y2="737" stroke="#f06868" stroke-width="1.6"/>
<line x1="1496" y1="713.5" x2="1496" y2="737" stroke="#f06868" stroke-width="1.6"/>
<line x1="1508" y1="713.5" x2="1508" y2="737" stroke="#f06868" stroke-width="1.6"/>
<line x1="1521" y1="713.5" x2="1521" y2="737" stroke="#f06868" stroke-width="1.6"/>
<rect x="1526" y="716" width="17" height="26" fill="none" stroke="#f06868" stroke-width="1.5" />
<line x1="1545.8" y1="713.5" x2="1558" y2="713.5" stroke="#f06868" stroke-width="1.6"/>
<line x1="1545.8" y1="737" x2="1558" y2="737" stroke="#f06868" stroke-width="1.6"/>
<line x1="1545.8" y1="713.5" x2="1545.8" y2="737" stroke="#f06868" stroke-width="1.6"/>
<line x1="1552" y1="713.5" x2="1552" y2="737" stroke="#f06868" stroke-width="1.6"/>
<line x1="1558" y1="713.5" x2="1558" y2="737" stroke="#f06868" stroke-width="1.6"/>
<line x1="660" y1="608.5" x2="1695" y2="608.5" stroke="#e070e0" stroke-width="1" stroke-dasharray="10,3,2,3"/>
<line x1="660" y1="674.5" x2="1695" y2="674.5" stroke="#e070e0" stroke-width="1" stroke-dasharray="10,3,2,3"/>
<line x1="660" y1="710.5" x2="1695" y2="710.5" stroke="#e070e0" stroke-width="1" stroke-dasharray="10,3,2,3"/>
<line x1="660" y1="741.5" x2="1695" y2="741.5" stroke="#e070e0" stroke-width="1" stroke-dasharray="10,3,2,3"/>
<rect x="693" y="592" width="64" height="155" rx="4" fill="none" stroke="#30e8f0" stroke-width="1" stroke-dasharray="5,3"/>
<rect x="943" y="700.7" width="79" height="48.8" rx="4" fill="none" stroke="#30e8f0" stroke-width="1" stroke-dasharray="5,3"/>
<rect x="1377" y="700" width="43" height="45" rx="4" fill="none" stroke="#30e8f0" stroke-width="1" stroke-dasharray="5,3"/>
<rect x="1561" y="587" width="88" height="158" rx="4" fill="none" stroke="#30e8f0" stroke-width="1" stroke-dasharray="5,3"/>
<line x1="740" y1="747" x2="740" y2="755" stroke="#30e8f0" stroke-width="1.2"/>
<path d="M733,762 A7,7 0 0 1 747,762 Z" fill="none" stroke="#30e8f0" stroke-width="1.2"/><rect x="736" y="758" width="8" height="11" fill="#30e8f0"/>
<line x1="1004" y1="747" x2="1004" y2="755" stroke="#30e8f0" stroke-width="1.2"/>
<path d="M997,762 A7,7 0 0 1 1011,762 Z" fill="none" stroke="#30e8f0" stroke-width="1.2"/><rect x="1000" y="758" width="8" height="11" fill="#30e8f0"/>
<line x1="1409" y1="747" x2="1409" y2="755" stroke="#30e8f0" stroke-width="1.2"/>
<path d="M1402,762 A7,7 0 0 1 1416,762 Z" fill="none" stroke="#30e8f0" stroke-width="1.2"/><rect x="1405" y="758" width="8" height="11" fill="#30e8f0"/>
<line x1="1575" y1="747" x2="1575" y2="755" stroke="#30e8f0" stroke-width="1.2"/>
<path d="M1568,762 A7,7 0 0 1 1582,762 Z" fill="none" stroke="#30e8f0" stroke-width="1.2"/><rect x="1571" y="758" width="8" height="11" fill="#30e8f0"/>
<rect x="1652" y="604" width="30" height="4" fill="#30e8f0" />
<rect x="1672" y="606" width="10" height="5" fill="#30e8f0" />
<circle cx="1689" cy="607" r="3.5" fill="none" stroke="#30e8f0" stroke-width="1.2"/>
<rect x="1652" y="672" width="30" height="4" fill="#30e8f0" />
<rect x="1672" y="674" width="10" height="5" fill="#30e8f0" />
<circle cx="1689" cy="675" r="3.5" fill="none" stroke="#30e8f0" stroke-width="1.2"/>
<rect x="1652" y="708" width="30" height="4" fill="#30e8f0" />
<rect x="1672" y="710" width="10" height="5" fill="#30e8f0" />
<circle cx="1689" cy="711" r="3.5" fill="none" stroke="#30e8f0" stroke-width="1.2"/>
<rect x="1652" y="738" width="30" height="4" fill="#30e8f0" />
<rect x="1672" y="740" width="10" height="5" fill="#30e8f0" />
<circle cx="1689" cy="741" r="3.5" fill="none" stroke="#30e8f0" stroke-width="1.2"/>
<line x1="953" y1="566" x2="953" y2="768" stroke="#b85050" stroke-width="1" stroke-dasharray="10,3,2,3"/>
<line x1="1014.3" y1="566" x2="1014.3" y2="768" stroke="#b85050" stroke-width="1" stroke-dasharray="10,3,2,3"/>
<line x1="1081.5" y1="566" x2="1081.5" y2="768" stroke="#b85050" stroke-width="1" stroke-dasharray="10,3,2,3"/>
<line x1="1158.5" y1="566" x2="1158.5" y2="768" stroke="#b85050" stroke-width="1" stroke-dasharray="10,3,2,3"/>
<line x1="1235.8" y1="566" x2="1235.8" y2="768" stroke="#b85050" stroke-width="1" stroke-dasharray="10,3,2,3"/>
<line x1="1302.4" y1="566" x2="1302.4" y2="768" stroke="#b85050" stroke-width="1" stroke-dasharray="10,3,2,3"/>
<line x1="1363.9" y1="566" x2="1363.9" y2="768" stroke="#b85050" stroke-width="1" stroke-dasharray="10,3,2,3"/>
<line x1="1426.2" y1="566" x2="1426.2" y2="768" stroke="#b85050" stroke-width="1" stroke-dasharray="10,3,2,3"/>
<line x1="1119" y1="592" x2="1119" y2="742" stroke="#f0f020" stroke-width="1"/>
<line x1="1198" y1="592" x2="1198" y2="742" stroke="#f0f020" stroke-width="1"/>
<circle cx="953.5" cy="559" r="6.6" fill="#c4ffff" stroke="#48c4c4" stroke-width="1.2"/><rect x="950.5" y="555" width="4" height="8" fill="#00f4f4"/>
<circle cx="1014.8" cy="559" r="6.6" fill="#c4ffff" stroke="#48c4c4" stroke-width="1.2"/><rect x="1011.8" y="555" width="4" height="8" fill="#00f4f4"/>
<circle cx="1082.0" cy="559" r="6.6" fill="#c4ffff" stroke="#48c4c4" stroke-width="1.2"/><rect x="1079.0" y="555" width="4" height="8" fill="#00f4f4"/>
<circle cx="1159.0" cy="559" r="6.6" fill="#c4ffff" stroke="#48c4c4" stroke-width="1.2"/><rect x="1156.0" y="555" width="4" height="8" fill="#00f4f4"/>
<circle cx="1236.3" cy="559" r="6.6" fill="#c4ffff" stroke="#48c4c4" stroke-width="1.2"/><rect x="1233.3" y="555" width="4" height="8" fill="#00f4f4"/>
<circle cx="1302.9" cy="559" r="6.6" fill="#c4ffff" stroke="#48c4c4" stroke-width="1.2"/><rect x="1299.9" y="555" width="4" height="8" fill="#00f4f4"/>
<circle cx="1364.4" cy="559" r="6.6" fill="#c4ffff" stroke="#48c4c4" stroke-width="1.2"/><rect x="1361.4" y="555" width="4" height="8" fill="#00f4f4"/>
<circle cx="1426.7" cy="559" r="6.6" fill="#c4ffff" stroke="#48c4c4" stroke-width="1.2"/><rect x="1423.7" y="555" width="4" height="8" fill="#00f4f4"/>
<line x1="678.5" y1="592" x2="678.5" y2="742" stroke="#000" stroke-width="1.3"/>
<line x1="673" y1="592.5" x2="728" y2="592.5" stroke="#000" stroke-width="1.3"/>
<line x1="673" y1="742.5" x2="728" y2="742.5" stroke="#000" stroke-width="1.3"/>
<path d="M674,588 L683,597 M674,738 L683,747 M696,774 L705,783 M1642,774 L1651,783" stroke="#000" stroke-width="1.3"/>
<rect x="672" y="661" width="5.5" height="12" fill="#000" />
<line x1="700.7" y1="684" x2="700.7" y2="779" stroke="#000" stroke-width="1.3"/>
<line x1="700" y1="778.5" x2="1652" y2="778.5" stroke="#000" stroke-width="1.3"/>
<line x1="1646.5" y1="593" x2="1646.5" y2="680" stroke="#000" stroke-width="1"/>
<line x1="1646.5" y1="680" x2="1646.5" y2="785" stroke="#000" stroke-width="1.3"/>
<line x1="1567" y1="592.5" x2="1648" y2="592.5" stroke="#f0f020" stroke-width="1.5"/>
<line x1="700" y1="592.5" x2="755" y2="592.5" stroke="#f0f020" stroke-width="1.2"/>
<rect x="1168" y="771" width="12" height="5" fill="#000" />
<rect x="969" y="778" width="26" height="5" fill="#707070" />
<path d="M960,770 L965,778 H970 M1005,770 L1000,778 H995" stroke="#404040" stroke-width="1" fill="none"/>
<path d="M1400,742 L1410,748 L1428,755 H1432" stroke="#404040" stroke-width="1" fill="none"/>
<rect x="1431" y="753" width="21" height="5" fill="#707070" /></g></svg>
<!-- p06_navbar -->
<svg class="a" style="left:1822px;top:290px;" width="20" height="9" viewBox="0 0 20 9"><rect x="1" y="1" width="18" height="6" fill="#f4f4f4" stroke="#777" stroke-width="1.2"/><rect x="0" y="3.5" width="20" height="1.4" fill="#aaa"/></svg>
<svg class="a" style="left:1852px;top:283px;" width="18" height="18" viewBox="0 0 18 18"><rect x="5" y="1" width="12" height="12" fill="#eee" stroke="#555" stroke-width="1.5"/><rect x="1" y="5" width="12" height="12" fill="#f2f2f2" stroke="#333" stroke-width="1.6"/><rect x="4.5" y="8.5" width="5" height="5" fill="#333"/></svg>
<svg class="a" style="left:1881px;top:283px;" width="20" height="18" viewBox="0 0 20 18"><path d="M3,3 L17,15 M17,3 L3,15" stroke="#333" stroke-width="6.5"/><path d="M3,3 L17,15 M17,3 L3,15" stroke="#fff" stroke-width="4"/></svg>
<div class="a" style="left:1862px;top:306px;width:48px;height:192px;background:#9a9a9a;border:1.5px solid #7a7a7a;border-radius:5px;"></div>
<svg class="a" style="left:1864px;top:308px;" width="44" height="188" viewBox="0 0 44 188"><circle cx="34" cy="7.5" r="5" fill="none" stroke="#b0b0b0" stroke-width="1.4"/><path d="M32,5.5 L36,9.5 M36,5.5 L32,9.5" stroke="#b0b0b0" stroke-width="1.2"/>
<path d="M2,14.5 H42" stroke="#a6a6a6" stroke-width="0.8"/>
<path d="M16,25 H24 A12,12 0 0 1 36,37 V40 A3,3 0 0 1 33,43" fill="none" stroke="#b0b0b0" stroke-width="2"/>
<path d="M16,25 A13,13 0 0 0 16,51 H22" fill="none" stroke="#b0b0b0" stroke-width="2"/>
<circle cx="17" cy="38" r="7" fill="none" stroke="#b0b0b0" stroke-width="2"/><path d="M12,43 L5,50" stroke="#b0b0b0" stroke-width="2"/>
<text x="23" y="59" font-family="Liberation Sans" font-weight="bold" font-size="14" fill="#94a8c2">2D</text>
<path d="M2,66.5 H42" stroke="#a6a6a6" stroke-width="0.8"/>
<path d="M12,104 C6,98 3,91 4,86 C5,83 8,84 10,87 L12,90 V76 A2.5,2.5 0 0 1 17,76 V88 V72 A2.5,2.5 0 0 1 22,72 V88 V74 A2.5,2.5 0 0 1 27,74 V89 V79 A2.5,2.5 0 0 1 32,79 V92 C32,99 29,104 24,105 H14Z" fill="none" stroke="#b0b0b0" stroke-width="2"/>
<path d="M5,114 L25,134 M5,114 V121 M5,114 H12 M26,114 L6,134 M26,114 V121 M26,114 H19 M6,134 H13 M6,134 V127" stroke="#b0b0b0" stroke-width="2" fill="none"/>
<circle cx="28" cy="137" r="7.5" fill="#9a9a9a" stroke="#b0b0b0" stroke-width="2.2"/><path d="M33,142 L40,149" stroke="#b0b0b0" stroke-width="3.5" stroke-linecap="round"/>
<path d="M18,160 H26 L22,164Z" fill="#b0b0b0"/>
<circle cx="35" cy="181" r="5" fill="none" stroke="#b0b0b0" stroke-width="1.4"/><path d="M32,181 H38" stroke="#b0b0b0" stroke-width="1.2"/></svg>
<!-- p10_title -->
<svg class="a" style="left:5px;top:7px;" width="62" height="29" viewBox="0 0 62 29">
<polygon points="0,4 7,0 7,27 0,29" fill="#e8707f"/>
<rect x="6" y="0" width="25" height="27" fill="#e51f4a"/>
<rect x="31" y="3" width="30" height="18" fill="#8a0f2b"/>
<text x="18.5" y="21" font-family="Liberation Sans" font-weight="bold" font-size="19" fill="#fff" text-anchor="middle">A</text>
<text x="46" y="16.5" font-family="Liberation Sans" font-weight="bold" font-size="11" fill="#fff" text-anchor="middle">LT</text>
</svg>
<svg class="a" style="left:80px;top:13px;" width="24" height="18" viewBox="0 0 24 18"><path d="M0,0 H14 L24,8 V18 H0 Z" fill="#d9d9d9"/><path d="M14,0 L24,8 H14Z" fill="#f4f4f4"/></svg>
<svg class="a" style="left:115px;top:12px;" width="26" height="20" viewBox="0 0 26 20"><path d="M1,0 H10 L12,3 H20 V7 H4 L0,20 Z" fill="#cfcfcf"/><path d="M5,7 H26 L20,20 H0 Z" fill="#dcdcdc"/></svg>
<svg class="a" style="left:152px;top:10px;" width="24" height="24" viewBox="0 0 24 24"><path d="M0,0 H24 V24 H2 L0,22Z" fill="#b9b9b9"/><rect x="5" y="0" width="14" height="9" fill="#efefef"/><rect x="5" y="15" width="14" height="9" fill="#efefef"/><rect x="7" y="17" width="2" height="5" fill="#333"/></svg>
<svg class="a" style="left:188px;top:10px;" width="25" height="24" viewBox="0 0 25 24"><path d="M0,0 H21 V20 H2 L0,18Z" fill="#b9b9b9"/><rect x="4" y="0" width="13" height="8" fill="#efefef"/><rect x="4" y="13" width="10" height="7" fill="#efefef"/><rect x="6" y="15" width="2" height="4" fill="#333"/><path d="M12,22 L22,11 L25,14 L15,24 Z" fill="#f2c14e"/><path d="M22,11 L24,9 L27,12 L25,14Z" fill="#e86b6b"/><path d="M12,22 L15,24 L11,25Z" fill="#ddd"/></svg>
<svg class="a" style="left:225px;top:10px;" width="23" height="24" viewBox="0 0 23 24"><rect x="0" y="0" width="14" height="23" rx="1.5" fill="#cfcfcf"/><rect x="2" y="2" width="10" height="18" fill="#606670"/><path d="M9,13 H15 L16,14 H22 V23 H9Z" fill="#f5c96a"/><path d="M10,17 H23 L21,23 H9Z" fill="#f9db8c"/></svg>
<svg class="a" style="left:263px;top:10px;" width="19" height="24" viewBox="0 0 19 24"><rect x="4" y="0" width="14" height="23" rx="1.5" fill="#cfcfcf"/><rect x="6" y="2" width="10" height="18" fill="#606670"/><path d="M0,7 H7 V4 L12,9 L7,14 V11 H0Z" fill="#6cc4f4"/></svg>
<svg class="a" style="left:295px;top:9px;" width="25" height="25" viewBox="0 0 25 25"><rect x="5" y="0" width="15" height="7" fill="#f4f4f4" stroke="#ccc" stroke-width="0.5"/><rect x="0" y="6" width="25" height="12" fill="#e6e6e6"/><rect x="0" y="12" width="25" height="6" fill="#c9c9c9"/><rect x="5" y="17" width="15" height="8" fill="#f4f4f4"/><rect x="6" y="18" width="13" height="6" fill="#8dd0f6"/></svg>
<svg class="a" style="left:332px;top:14px;" width="26" height="16" viewBox="0 0 26 16"><path d="M0,6 L8,0 V4 C16,4 22,6 24,15 C20,10 15,9 8,9 V13 Z" fill="#d4d4d4"/></svg>
<svg class="a" style="left:366px;top:20px;" width="8" height="5" viewBox="0 0 8 5"><path d="M0,0 H8 L4,5Z" fill="#d4d4d4"/></svg>
<svg class="a" style="left:386px;top:14px;" width="25" height="16" viewBox="0 0 25 16"><path d="M25,6 L17,0 V4 C9,4 3,6 1,15 C5,10 10,9 17,9 V13 Z" fill="#7d8491"/></svg>
<svg class="a" style="left:420px;top:20px;" width="8" height="5" viewBox="0 0 8 5"><path d="M0,0 H8 L4,5Z" fill="#8a909b"/></svg>
<svg class="a" style="left:440px;top:14px;" width="12" height="13" viewBox="0 0 12 13"><rect x="0" y="0" width="12" height="2" fill="#d4d4d4"/><rect x="0" y="4" width="12" height="1.5" fill="#d4d4d4"/><path d="M0,6 H12 L6,13Z" fill="#d4d4d4"/></svg>
<svg class="a" style="left:464px;top:11px;" width="25" height="22" viewBox="0 0 25 22"><path d="M0,10 L25,0 L18,22 L10,13 Z" fill="#5ab8ee"/><path d="M10,13 L25,0 L12,20Z" fill="#3b94cc"/></svg>
<div class="t" style="left:494.1px;top:13.76px;font-size:18px;line-height:18px;color:#7cc6f2;font-family:'Liberation Sans',sans-serif;transform:scaleX(0.9348);">Share</div>
<div class="t" style="left:650.6px;top:12.26px;font-size:18px;line-height:18px;color:#b8bcc4;font-family:'Liberation Sans',sans-serif;transform:scaleX(0.9155);">BLVD OFFICE_ELEVATION-AUTOCAD.dwg</div>
<svg class="a" style="left:1087px;top:16px;" width="8" height="12" viewBox="0 0 8 12"><path d="M0,0 L8,6 L0,12Z" fill="#d8d8d8"/></svg>
<div class="a" style="left:1102px;top:5px;width:270px;height:33px;background:#434c5b;border:2px solid #1f242d;"></div>
<div class="t" style="left:1106.1px;top:13.11px;font-size:17px;line-height:17px;color:#a9aeb6;font-family:'Liberation Sans',sans-serif;transform:scaleX(0.9378);font-style:italic;">Type a keyword or phrase</div>
<svg class="a" style="left:1379px;top:11px;" width="23" height="23" viewBox="0 0 23 23"><circle cx="9" cy="9" r="7.5" fill="#5c6370" stroke="#f2f2f2" stroke-width="2.2"/><path d="M14,14 L21,21" stroke="#e0a36a" stroke-width="2.6" stroke-linecap="round"/></svg>
<svg class="a" style="left:1413px;top:9px;" width="26" height="24" viewBox="0 0 26 24"><circle cx="13" cy="7" r="6.5" fill="#7ccaf6"/><path d="M0,24 C0,15 6,13 13,13 C20,13 26,15 26,24Z" fill="#7ccaf6"/></svg>
<div class="t" style="left:1444.5px;top:13.16px;font-size:18px;line-height:18px;color:#eceef2;font-family:'Liberation Sans',sans-serif;transform:scaleX(0.9692);">nishant.naikVY...</div>
<svg class="a" style="left:1574px;top:19px;" width="8" height="5" viewBox="0 0 8 5"><path d="M0,0 H8 L4,5Z" fill="#e0e0e0"/></svg>
<svg class="a" style="left:1597px;top:11px;" width="24" height="23" viewBox="0 0 24 23"><path d="M12,3 L3,19 H21 Z" fill="none" stroke="#e2e2e2" stroke-width="3"/><circle cx="12" cy="3" r="2.8" fill="#e2e2e2"/><circle cx="3" cy="19.5" r="2.8" fill="#e2e2e2"/><circle cx="21" cy="19.5" r="2.8" fill="#e2e2e2"/></svg>
<svg class="a" style="left:1629px;top:19px;" width="8" height="5" viewBox="0 0 8 5"><path d="M0,0 H8 L4,5Z" fill="#e0e0e0"/></svg>
<div class="a" style="left:1653px;top:8px;width:1px;height:26px;background:#343b48;"></div>
<svg class="a" style="left:1666px;top:10px;" width="25" height="25" viewBox="0 0 25 25"><circle cx="12.5" cy="12.5" r="12.3" fill="#d9d9d9"/><text x="12.5" y="19" font-family="Liberation Sans" font-size="18" fill="#555b66" text-anchor="middle">?</text></svg>
<svg class="a" style="left:1701px;top:19px;" width="8" height="5" viewBox="0 0 8 5"><path d="M0,0 H8 L4,5Z" fill="#e0e0e0"/></svg>
<div class="a" style="left:1815px;top:25px;width:16px;height:3px;background:#eeeeee;"></div>
<div class="a" style="left:1850px;top:10px;width:19px;height:18px;background:transparent;border:2.5px solid #eeeeee;"></div>
<svg class="a" style="left:1887px;top:11px;" width="18" height="18" viewBox="0 0 18 18"><path d="M1,1 L17,17 M17,1 L1,17" stroke="#eeeeee" stroke-width="2.8"/></svg>
<!-- p20_tabs -->
<div class="a" style="left:381px;top:46px;width:64px;height:30px;background:#3b4453;"></div>
<div class="t" style="left:26.7px;top:53.16px;font-size:18px;line-height:18px;color:#e6e8ec;font-family:'Liberation Sans',sans-serif;transform:scaleX(1.0435);">Home</div>
<div class="t" style="left:104.8px;top:53.16px;font-size:18px;line-height:18px;color:#e6e8ec;font-family:'Liberation Sans',sans-serif;transform:scaleX(0.9930);">Insert</div>
<div class="t" style="left:180.0px;top:53.16px;font-size:18px;line-height:18px;color:#e6e8ec;font-family:'Liberation Sans',sans-serif;transform:scaleX(1.0225);">Annotate</div>
<div class="t" style="left:282.6px;top:53.16px;font-size:18px;line-height:18px;color:#e6e8ec;font-family:'Liberation Sans',sans-serif;transform:scaleX(0.9624);">Parametric</div>
<div class="t" style="left:395.4px;top:53.16px;font-size:18px;line-height:18px;color:#e6e8ec;font-family:'Liberation Sans',sans-serif;transform:scaleX(0.9385);">View</div>
<div class="t" style="left:461.8px;top:53.16px;font-size:18px;line-height:18px;color:#e6e8ec;font-family:'Liberation Sans',sans-serif;transform:scaleX(1.0063);">Manage</div>
<div class="t" style="left:555.1px;top:53.16px;font-size:18px;line-height:18px;color:#e6e8ec;font-family:'Liberation Sans',sans-serif;transform:scaleX(1.0717);">Output</div>
<div class="t" style="left:642.4px;top:53.16px;font-size:18px;line-height:18px;color:#e6e8ec;font-family:'Liberation Sans',sans-serif;transform:scaleX(1.0022);">Collaborate</div>
<div class="a" style="left:750px;top:46px;width:80px;height:30px;background:#1677ac;border:2px solid #2aa0e0;"></div>
<div class="t" style="left:763.5px;top:53.16px;font-size:18px;line-height:18px;color:#f4f6f8;font-family:'Liberation Sans',sans-serif;transform:scaleX(0.9868);">Layout</div>
<div class="a" style="left:862px;top:57px;width:24px;height:11px;background:#ececec;"></div>
<svg class="a" style="left:869px;top:59px;" width="10" height="6" viewBox="0 0 10 6"><path d="M0,6 L5,0 L10,6Z" fill="#555"/></svg>
<svg class="a" style="left:892px;top:60px;" width="7" height="5" viewBox="0 0 7 5"><path d="M0,0 H7 L3.5,5Z" fill="#e0e0e0"/></svg>
<!-- p30_ribbon -->
<div class="a" style="left:168px;top:80px;width:2px;height:143px;background:#2b313c;"></div>
<div class="a" style="left:478px;top:80px;width:2px;height:143px;background:#2b313c;"></div>
<div class="a" style="left:739px;top:80px;width:2px;height:143px;background:#2b313c;"></div>
<div class="a" style="left:829px;top:80px;width:2px;height:143px;background:#2b313c;"></div>
<div class="a" style="left:903px;top:80px;width:2px;height:143px;background:#2b313c;"></div>
<div class="a" style="left:1342px;top:80px;width:2px;height:143px;background:#2b313c;"></div>
<div class="a" style="left:11px;top:83px;width:57px;height:107px;background:#46596f;border:2px solid #5db4e8;"></div>
<div class="a" style="left:67px;top:83px;width:97px;height:107px;background:#46596f;border:2px solid #5db4e8;"></div>
<div class="a" style="left:1181px;top:83px;width:83px;height:107px;background:#46596f;border:2px solid #5db4e8;"></div>
<div class="a" style="left:1266px;top:83px;width:36px;height:33px;background:#46596f;border:2px solid #5db4e8;"></div>
<div class="a" style="left:1301px;top:156px;width:37px;height:34px;background:#46596f;border:2px solid #5db4e8;"></div>
<div class="a" style="left:1446px;top:83px;width:58px;height:107px;background:#46596f;border:2px solid #5db4e8;"></div>
<div class="a" style="left:1503px;top:83px;width:63px;height:107px;background:#46596f;border:2px solid #5db4e8;"></div>
<svg class="a" style="left:15px;top:86px;" width="52" height="50" viewBox="0 0 52 50"><path d="M6,45 V6" stroke="#e6e6e6" stroke-width="2"/><path d="M0,9 L6,0 L12,9Z" fill="#e6e6e6"/>
<path d="M6,45 H45" stroke="#e6e6e6" stroke-width="2"/><path d="M42,39 L51,45 L42,51Z" fill="#e6e6e6"/>
<path d="M6,45 L28,25" stroke="#e6e6e6" stroke-width="2"/><path d="M22,22 L32,20 L30,30Z" fill="#e6e6e6"/></svg>
<div class="t" style="left:24.1px;top:145.26px;font-size:18px;line-height:18px;color:#e6e8ec;font-family:'Liberation Sans',sans-serif;transform:scaleX(0.9028);">UCS</div>
<div class="t" style="left:22.4px;top:170.26px;font-size:18px;line-height:18px;color:#e6e8ec;font-family:'Liberation Sans',sans-serif;transform:scaleX(1.0645);">Icon</div>
<svg class="a" style="left:107px;top:88px;" width="24" height="49" viewBox="0 0 24 49"><rect x="0" y="0" width="24" height="49" fill="#f0f0f0"/><rect x="0" y="0" width="24" height="10" fill="#9b9b9b"/><rect x="6" y="16" width="12" height="11" fill="#505660"/><rect x="6" y="32" width="12" height="11" fill="#505660"/></svg>
<div class="t" style="left:73.5px;top:145.76px;font-size:18px;line-height:18px;color:#e6e8ec;font-family:'Liberation Sans',sans-serif;transform:scaleX(1.0241);">Navigation</div>
<div class="t" style="left:104.6px;top:170.26px;font-size:18px;line-height:18px;color:#e6e8ec;font-family:'Liberation Sans',sans-serif;transform:scaleX(0.8889);">Bar</div>
<div class="t" style="left:19.5px;top:202.26px;font-size:18px;line-height:18px;color:#e6e8ec;font-family:'Liberation Sans',sans-serif;transform:scaleX(1.0043);">Viewport Tools</div>
<svg class="a" style="left:146px;top:208px;" width="11" height="6" viewBox="0 0 11 6"><path d="M0,0 H11 L5.5,6Z" fill="#e0e0e0"/></svg>
<div class="a" style="left:175px;top:85px;width:298px;height:32px;background:#4b5466;border:1px solid #2f3540;"></div>
<svg class="a" style="left:179px;top:90px;" width="24" height="24" viewBox="0 0 24 24"><rect x="0" y="0" width="24" height="24" fill="#e8e8e8"/><path d="M6,0 V24 M12,0 V24 M18,0 V24 M0,6 H24 M0,12 H24 M0,18 H24" stroke="#9a9a9a" stroke-width="1"/><path d="M2,22 L2,6 L16,22Z" fill="#222"/></svg>
<div class="t" style="left:205.0px;top:93.51px;font-size:18px;line-height:18px;color:#e6e8ec;font-family:'Liberation Sans',sans-serif;transform:scaleX(0.9605);">Unsaved View</div>
<svg class="a" style="left:456px;top:97px;" width="14" height="7" viewBox="0 0 14 7"><path d="M0,0 H14 L7,7Z" fill="#e0e0e0"/></svg>
<svg class="a" style="left:179px;top:125px;" width="25" height="28" viewBox="0 0 25 28"><path d="M1,6 V26 H6 M1,6 H6" stroke="#d8d8d8" stroke-width="1.5" fill="none"/><rect x="4" y="6" width="16" height="18" fill="#656b76" stroke="#d8d8d8" stroke-width="1"/><circle cx="17" cy="21" r="4.5" fill="#666" stroke="#e8e8e8" stroke-width="1.5"/><path d="M20,24 L24,28" stroke="#e8a060" stroke-width="2"/><path d="M18,0 L19.5,4 L24,4 L20.5,6.5 L22,11 L18,8 L14,11 L15.5,6.5 L12,4 L16.5,4Z" fill="#f4c542"/></svg>
<div class="t" style="left:210.0px;top:129.26px;font-size:18px;line-height:18px;color:#e6e8ec;font-family:'Liberation Sans',sans-serif;transform:scaleX(0.9684);">New View</div>
<svg class="a" style="left:179px;top:162px;" width="25" height="25" viewBox="0 0 25 25"><rect x="1" y="1" width="18" height="14" fill="#9a9fa8" stroke="#e8e8e8" stroke-width="1.5"/><circle cx="8" cy="8" r="4.5" fill="#777" stroke="#eee" stroke-width="1.5"/><path d="M4,12 L0,17" stroke="#e8a060" stroke-width="2"/><rect x="10" y="12" width="15" height="13" fill="#f0f0f0"/><path d="M13,16 H22 M13,19 H22 M13,22 H22" stroke="#555" stroke-width="1.2"/></svg>
<div class="t" style="left:211.0px;top:165.26px;font-size:18px;line-height:18px;color:#e6e8ec;font-family:'Liberation Sans',sans-serif;transform:scaleX(0.9696);">View Manager</div>
<div class="t" style="left:269.5px;top:202.26px;font-size:18px;line-height:18px;color:#e6e8ec;font-family:'Liberation Sans',sans-serif;transform:scaleX(0.9771);">Named Views</div>
<svg class="a" style="left:529px;top:89px;" width="47" height="47" viewBox="0 0 47 47"><rect x="4" y="4" width="39" height="39" fill="#4e5665" stroke="#6c7482" stroke-width="1.5"/><path d="M0,8 V0 H8 M39,0 H47 V8 M47,39 V47 H39 M8,47 H0 V39" stroke="#6c7482" stroke-width="1.5" fill="none"/></svg>
<div class="t" style="left:518.0px;top:143.26px;font-size:18px;line-height:18px;color:#7d8592;font-family:'Liberation Sans',sans-serif;transform:scaleX(1.0100);">Viewport</div>
<div class="t" style="left:498.5px;top:168.26px;font-size:18px;line-height:18px;color:#7d8592;font-family:'Liberation Sans',sans-serif;transform:scaleX(1.0286);">Configuration</div>
<svg class="a" style="left:612px;top:165px;" width="7" height="5" viewBox="0 0 7 5"><path d="M0,0 H7 L3.5,5Z" fill="#8a909b"/></svg>
<svg class="a" style="left:637px;top:89px;" width="26" height="25" viewBox="0 0 26 25"><rect x="1" y="1" width="17" height="17" fill="#555c69" stroke="#747b88" stroke-width="1.2"/><path d="M9.5,1 V18 M1,9.5 H18" stroke="#747b88"/><rect x="11" y="12" width="15" height="12" fill="#6d7480"/><path d="M14,16 H23 M14,20 H23" stroke="#3b4453"/></svg>
<div class="t" style="left:669.0px;top:92.01px;font-size:18px;line-height:18px;color:#7d8592;font-family:'Liberation Sans',sans-serif;transform:scaleX(1.0000);">Named</div>
<svg class="a" style="left:639px;top:126px;" width="22" height="22" viewBox="0 0 22 22"><rect x="1" y="1" width="20" height="20" fill="#555c69" stroke="#747b88" stroke-width="1.5"/><path d="M11,1 V11 M1,11 H21" stroke="#747b88"/><rect x="2" y="12" width="18" height="8" fill="#6d7480"/></svg>
<div class="t" style="left:668.8px;top:128.26px;font-size:18px;line-height:18px;color:#7d8592;font-family:'Liberation Sans',sans-serif;transform:scaleX(0.9375);">Join</div>
<svg class="a" style="left:637px;top:160px;" width="26" height="25" viewBox="0 0 26 25"><rect x="1" y="1" width="20" height="19" fill="#555c69" stroke="#747b88" stroke-width="1.5"/><path d="M14,23 A5,5 0 1 0 14,14 L12,12" stroke="#747b88" stroke-width="1.5" fill="none"/></svg>
<div class="t" style="left:669.1px;top:164.51px;font-size:18px;line-height:18px;color:#7d8592;font-family:'Liberation Sans',sans-serif;transform:scaleX(0.9426);">Restore</div>
<div class="t" style="left:541.5px;top:202.01px;font-size:18px;line-height:18px;color:#e6e8ec;font-family:'Liberation Sans',sans-serif;transform:scaleX(1.0191);">Model Viewports</div>
<svg class="a" style="left:760px;top:88px;" width="50" height="45" viewBox="0 0 50 45"><rect x="1" y="4" width="23" height="40" fill="#e0e0e0"/><path d="M25,4 H41 L49,12 V44 H25Z" fill="#e0e0e0"/><path d="M41,4 L49,12 H41Z" fill="#f8f8f8"/>
<rect x="15" y="14" width="6" height="9" fill="none" stroke="#d03030" stroke-width="1.2"/><rect x="7" y="27" width="13" height="7" fill="none" stroke="#30a030" stroke-width="1.2"/>
<rect x="29" y="18" width="10" height="5" fill="none" stroke="#888" stroke-width="1"/><rect x="29" y="26" width="7" height="8" fill="none" stroke="#888" stroke-width="1"/><path d="M24,0 V45" stroke="#6cc4f4" stroke-width="1.5"/></svg>
<div class="t" style="left:764.8px;top:145.76px;font-size:18px;line-height:18px;color:#e6e8ec;font-family:'Liberation Sans',sans-serif;transform:scaleX(0.9583);">DWG</div>
<div class="t" style="left:748.0px;top:169.76px;font-size:18px;line-height:18px;color:#e6e8ec;font-family:'Liberation Sans',sans-serif;transform:scaleX(1.0000);">Compare</div>
<div class="t" style="left:748.0px;top:201.76px;font-size:18px;line-height:18px;color:#e6e8ec;font-family:'Liberation Sans',sans-serif;transform:scaleX(1.0000);">Compare</div>
<svg class="a" style="left:845px;top:88px;" width="47" height="46" viewBox="0 0 47 46"><path d="M14,13 A17,17 0 1 1 20,38" stroke="#e6e6e6" stroke-width="3" fill="none"/><path d="M8,8 L18,18 L6,20Z" fill="#e6e6e6"/>
<path d="M27,10 V24 H36" stroke="#e6e6e6" stroke-width="3" fill="none"/>
<path d="M0,22 H16 L21,27 V46 H0Z" fill="#2b78c8"/><path d="M0,36 L21,40 V46 H0Z" fill="#f4c542"/><path d="M8,24 V34 M3,29 H14" stroke="#fff" stroke-width="1.2"/><rect x="6" y="27" width="4" height="4" fill="none" stroke="#fff"/></svg>
<div class="t" style="left:846.5px;top:145.76px;font-size:18px;line-height:18px;color:#e6e8ec;font-family:'Liberation Sans',sans-serif;transform:scaleX(0.9643);">DWG</div>
<div class="t" style="left:838.5px;top:169.76px;font-size:18px;line-height:18px;color:#e6e8ec;font-family:'Liberation Sans',sans-serif;transform:scaleX(1.0091);">History</div>
<div class="t" style="left:838.5px;top:201.76px;font-size:18px;line-height:18px;color:#e6e8ec;font-family:'Liberation Sans',sans-serif;transform:scaleX(1.0091);">History</div>
<svg class="a" style="left:925px;top:88px;" width="38" height="48" viewBox="0 0 38 48"><path d="M0,0 H37 V22 L33,26 V48 H0Z" fill="#f0f0f0"/><rect x="5" y="6" width="9" height="9" fill="#555"/><rect x="18" y="6" width="9" height="9" fill="#555"/><rect x="5" y="20" width="9" height="9" fill="#555"/><rect x="18" y="20" width="9" height="9" fill="#555"/><rect x="5" y="34" width="9" height="9" fill="#555"/><rect x="18" y="34" width="9" height="9" fill="#555"/></svg>
<div class="t" style="left:928.0px;top:145.76px;font-size:18px;line-height:18px;color:#e6e8ec;font-family:'Liberation Sans',sans-serif;transform:scaleX(1.0000);">Tool</div>
<div class="t" style="left:912.8px;top:169.76px;font-size:18px;line-height:18px;color:#e6e8ec;font-family:'Liberation Sans',sans-serif;transform:scaleX(0.9325);">Palettes</div>
<svg class="a" style="left:1003px;top:88px;" width="37" height="48" viewBox="0 0 37 48"><rect x="0" y="0" width="37" height="48" fill="#d8d8d8"/><rect x="4" y="4" width="29" height="22" fill="#8fd0f8" stroke="#444" stroke-width="0.8"/><path d="M4,32 H33 M4,41 H33" stroke="#555" stroke-width="1"/><rect x="11" y="29" width="2" height="6" fill="#555"/><rect x="23" y="38" width="2" height="6" fill="#555"/></svg>
<div class="t" style="left:981.5px;top:145.76px;font-size:18px;line-height:18px;color:#e6e8ec;font-family:'Liberation Sans',sans-serif;transform:scaleX(0.9812);">Properties</div>
<svg class="a" style="left:1073px;top:88px;" width="48" height="48" viewBox="0 0 48 48"><path d="M20,0 H40 L48,8 V36 H20Z" fill="#8fd0f8"/><path d="M40,0 L48,8 H40Z" fill="#c8ecff"/><rect x="1" y="16" width="28" height="22" fill="#656c78" stroke="#e6e6e6" stroke-width="1.2"/><circle cx="30" cy="38" r="9" fill="#656c78" stroke="#e6e6e6" stroke-width="1.2"/><rect x="-1" y="36" width="4" height="4" fill="#e6e6e6"/></svg>
<div class="t" style="left:1070.5px;top:145.76px;font-size:18px;line-height:18px;color:#e6e8ec;font-family:'Liberation Sans',sans-serif;transform:scaleX(0.9510);">Blocks</div>
<svg class="a" style="left:1135px;top:88px;" width="45" height="45" viewBox="0 0 45 45"><rect x="0" y="10" width="34" height="35" fill="#ececec"/><rect x="4" y="18" width="4" height="4" fill="#2a8ae0"/><rect x="4" y="27" width="4" height="4" fill="#2a8ae0"/><rect x="4" y="36" width="4" height="4" fill="#2a8ae0"/><path d="M12,20 H30 M12,29 H30 M12,38 H30" stroke="#444" stroke-width="1.5"/><path d="M30,0 L26,26 M40,0 L36,26 M22,8 H44 M21,18 H43" stroke="#6cc4f4" stroke-width="3"/></svg>
<div class="t" style="left:1129.0px;top:145.76px;font-size:18px;line-height:18px;color:#e6e8ec;font-family:'Liberation Sans',sans-serif;transform:scaleX(1.0106);">Count</div>
<svg class="a" style="left:1199px;top:86px;" width="52" height="52" viewBox="0 0 52 52"><path d="M26,9 L39,41" stroke="#dedede" stroke-width="18" stroke-linecap="round"/><path d="M1,10 H17 L39,50 H1Z" fill="#dedede"/><path d="M16.5,9 L33,43" stroke="#222" stroke-width="1.3"/><circle cx="38.5" cy="41.5" r="5.5" fill="none" stroke="#222" stroke-width="1.3"/></svg>
<div class="t" style="left:1185.8px;top:145.76px;font-size:18px;line-height:18px;color:#e6e8ec;font-family:'Liberation Sans',sans-serif;transform:scaleX(0.9455);">Sheet Set</div>
<div class="t" style="left:1188.5px;top:169.76px;font-size:18px;line-height:18px;color:#e6e8ec;font-family:'Liberation Sans',sans-serif;transform:scaleX(0.9893);">Manager</div>
<div class="t" style="left:1082.8px;top:201.76px;font-size:18px;line-height:18px;color:#e6e8ec;font-family:'Liberation Sans',sans-serif;transform:scaleX(0.9325);">Palettes</div>
<svg class="a" style="left:1152px;top:208px;" width="11" height="6" viewBox="0 0 11 6"><path d="M0,0 H11 L5.5,6Z" fill="#e0e0e0"/></svg>
<svg class="a" style="left:1271px;top:91px;" width="26" height="15" viewBox="0 0 26 15"><rect x="0" y="0" width="26" height="15" fill="#ececec"/><rect x="0" y="0" width="26" height="3" fill="#777"/><path d="M3,6 L7,8 L3,10 M8,11 H14" stroke="#333" stroke-width="1" fill="none"/></svg>
<svg class="a" style="left:1307px;top:90px;" width="26" height="17" viewBox="0 0 26 17"><rect x="0" y="0" width="9" height="9" fill="#f4c542"/><rect x="6" y="4" width="8" height="9" fill="#ddd"/><rect x="11" y="8" width="15" height="9" fill="#f0f0f0"/><path d="M14,11 H23 M14,14 H23" stroke="#444"/></svg>
<svg class="a" style="left:1272px;top:125px;" width="26" height="21" viewBox="0 0 26 21"><path d="M0,8 L8,2 H20 L12,8Z" fill="#d6d6d6"/><path d="M0,13 L8,7 H20 L12,13Z" fill="#e0e0e0"/><path d="M0,18 L8,12 H20 L12,18Z" fill="#ececec"/><rect x="14" y="10" width="12" height="11" fill="#f0f0f0"/><rect x="16" y="12" width="7" height="4" fill="#5aaee8"/></svg>
<svg class="a" style="left:1310px;top:125px;" width="20" height="25" viewBox="0 0 20 25"><rect x="0" y="0" width="20" height="25" fill="#d6d6d6"/><rect x="3" y="3" width="14" height="5" fill="#555"/><rect x="3" y="11" width="3" height="3" fill="#555"/><rect x="8" y="11" width="3" height="3" fill="#555"/><rect x="13" y="11" width="3" height="3" fill="#555"/><rect x="3" y="16" width="3" height="3" fill="#555"/><rect x="8" y="16" width="3" height="3" fill="#555"/><rect x="13" y="16" width="3" height="3" fill="#555"/></svg>
<svg class="a" style="left:1272px;top:160px;" width="25" height="25" viewBox="0 0 25 25"><rect x="0" y="0" width="25" height="25" fill="#d6d6d6"/><path d="M4,3 V22" stroke="#666" stroke-width="1" stroke-dasharray="2,1"/><rect x="11" y="5" width="4" height="4" fill="none" stroke="#555"/><rect x="17" y="5" width="4" height="4" fill="none" stroke="#555"/><rect x="11" y="11" width="4" height="4" fill="none" stroke="#555"/><rect x="17" y="11" width="4" height="4" fill="none" stroke="#555"/><rect x="11" y="17" width="10" height="4" fill="none" stroke="#555"/></svg>
<svg class="a" style="left:1307px;top:162px;" width="27" height="24" viewBox="0 0 27 24"><rect x="0" y="5" width="27" height="19" fill="#d8d8d8"/><rect x="9" y="0" width="9" height="7" fill="#d8d8d8"/><rect x="11" y="2" width="5" height="3" fill="#555"/></svg>
<svg class="a" style="left:1373px;top:88px;" width="50" height="48" viewBox="0 0 50 48"><rect x="0" y="3" width="34" height="25" fill="#f0f0f0"/><rect x="0" y="3" width="34" height="3" fill="#bbb"/><rect x="14" y="18" width="34" height="25" fill="#f0f0f0" stroke="#3b4453" stroke-width="1"/><rect x="14" y="18" width="34" height="3" fill="#bbb"/>
<path d="M47,12 V6 H38" stroke="#eee" stroke-width="1.5" fill="none"/><path d="M36,6 L41,2 V10Z" fill="#eee"/><path d="M3,32 V38 H12" stroke="#eee" stroke-width="1.5" fill="none"/><path d="M14,38 L9,34 V42Z" fill="#eee"/></svg>
<div class="t" style="left:1373.7px;top:142.76px;font-size:18px;line-height:18px;color:#e6e8ec;font-family:'Liberation Sans',sans-serif;transform:scaleX(0.9745);">Switch</div>
<div class="t" style="left:1362.6px;top:167.76px;font-size:18px;line-height:18px;color:#e6e8ec;font-family:'Liberation Sans',sans-serif;transform:scaleX(1.0125);">Windows</div>
<svg class="a" style="left:1438px;top:162px;" width="8" height="5" viewBox="0 0 8 5"><path d="M0,0 H8 L4,5Z" fill="#e0e0e0"/></svg>
<svg class="a" style="left:1452px;top:97px;" width="48" height="31" viewBox="0 0 48 31"><path d="M0,12 H28 L38,0 H48 V31 H0Z" fill="#d4d4d4"/><path d="M8,12 L16,2 H28 L20,12Z" fill="#aaa"/><path d="M34,6 L38,10 M38,6 L34,10" stroke="#222" stroke-width="1.2"/></svg>
<div class="t" style="left:1464.1px;top:146.06px;font-size:18px;line-height:18px;color:#e6e8ec;font-family:'Liberation Sans',sans-serif;transform:scaleX(0.9185);">File</div>
<div class="t" style="left:1460.0px;top:170.76px;font-size:18px;line-height:18px;color:#e6e8ec;font-family:'Liberation Sans',sans-serif;transform:scaleX(0.9108);">Tabs</div>
<svg class="a" style="left:1512px;top:97px;" width="48" height="31" viewBox="0 0 48 31"><path d="M0,0 H48 V31 H26 L16,19 H0Z" fill="#d4d4d4"/><path d="M8,21 L20,21 L26,29 L14,29Z" fill="#aaa"/></svg>
<div class="t" style="left:1508.4px;top:145.76px;font-size:18px;line-height:18px;color:#e6e8ec;font-family:'Liberation Sans',sans-serif;transform:scaleX(0.9830);">Layout</div>
<div class="t" style="left:1518.4px;top:170.76px;font-size:18px;line-height:18px;color:#e6e8ec;font-family:'Liberation Sans',sans-serif;transform:scaleX(0.9216);">Tabs</div>
<svg class="a" style="left:1574px;top:89px;" width="25" height="24" viewBox="0 0 25 24"><rect x="0" y="0" width="25" height="24" fill="#e8e8e8"/><rect x="0" y="0" width="25" height="3" fill="#aaa"/><rect x="0" y="10" width="25" height="3" fill="#3b4453"/><rect x="0" y="13" width="25" height="3" fill="#aaa"/></svg>
<div class="t" style="left:1605.2px;top:92.36px;font-size:18px;line-height:18px;color:#e6e8ec;font-family:'Liberation Sans',sans-serif;transform:scaleX(0.9898);">Tile Horizontally</div>
<svg class="a" style="left:1574px;top:125px;" width="24" height="24" viewBox="0 0 24 24"><rect x="0" y="0" width="24" height="24" fill="#e8e8e8"/><rect x="0" y="0" width="24" height="3" fill="#aaa"/><rect x="10.5" y="0" width="3" height="24" fill="#3b4453"/></svg>
<div class="t" style="left:1605.2px;top:128.56px;font-size:18px;line-height:18px;color:#e6e8ec;font-family:'Liberation Sans',sans-serif;transform:scaleX(0.9476);">Tile Vertically</div>
<svg class="a" style="left:1574px;top:161px;" width="25" height="24" viewBox="0 0 25 24"><rect x="0" y="0" width="15" height="12" fill="#e8e8e8"/><rect x="5" y="5" width="15" height="12" fill="#e8e8e8" stroke="#3b4453"/><rect x="10" y="10" width="15" height="14" fill="#e8e8e8" stroke="#3b4453"/></svg>
<div class="t" style="left:1604.3px;top:164.76px;font-size:18px;line-height:18px;color:#e6e8ec;font-family:'Liberation Sans',sans-serif;transform:scaleX(0.9391);">Cascade</div>
<div class="t" style="left:1497.7px;top:202.36px;font-size:18px;line-height:18px;color:#e6e8ec;font-family:'Liberation Sans',sans-serif;transform:scaleX(0.9985);">Interface</div>
<svg class="a" style="left:1727px;top:206px;" width="10" height="9" viewBox="0 0 10 9"><path d="M1,1 L8,8 M8,3 V8 H3" stroke="#e0e0e0" stroke-width="1.6" fill="none"/></svg>
<!-- p40_filetabs -->
<svg class="a" style="left:20px;top:235px;" width="9" height="23" viewBox="0 0 9 23"><path d="M8.5,0 L0.5,23" stroke="#5a6170" stroke-width="1.3"/></svg>
<div class="t" style="left:42.0px;top:238.36px;font-size:18px;line-height:18px;color:#e6e8ec;font-family:'Liberation Sans',sans-serif;transform:scaleX(0.9595);">Start</div>
<svg class="a" style="left:92px;top:235px;" width="9" height="23" viewBox="0 0 9 23"><path d="M8.5,0 L0.5,23" stroke="#5a6170" stroke-width="1.3"/></svg>
<div class="t" style="left:114.0px;top:238.06px;font-size:18px;line-height:18px;color:#e6e8ec;font-family:'Liberation Sans',sans-serif;transform:scaleX(0.9524);">Sections_01*</div>
<svg class="a" style="left:244px;top:228px;" width="384" height="37" viewBox="0 0 384 37"><path d="M17,0 H384 L370,37 H0Z" fill="#3b4453"/></svg>
<div class="t" style="left:269.1px;top:238.36px;font-size:18px;line-height:18px;color:#f4f6f8;font-family:'Liberation Sans',sans-serif;transform:scaleX(0.9486);font-weight:bold;">BLVD OFFICE_ELEVATION-AUTOCAD*</div>
<svg class="a" style="left:598px;top:240px;" width="13" height="13" viewBox="0 0 13 13"><path d="M1,1 L12,12 M12,1 L1,12" stroke="#b9bec6" stroke-width="2.4"/></svg>
<div class="t" style="left:638.1px;top:238.76px;font-size:18px;line-height:18px;color:#e6e8ec;font-family:'Liberation Sans',sans-serif;transform:scaleX(0.9194);">BLVD OFFICE_PLAN-AUTOCAD*</div>
<svg class="a" style="left:922px;top:235px;" width="9" height="23" viewBox="0 0 9 23"><path d="M8.5,0 L0.5,23" stroke="#5a6170" stroke-width="1.3"/></svg>
<div class="t" style="left:944.2px;top:238.76px;font-size:18px;line-height:18px;color:#e6e8ec;font-family:'Liberation Sans',sans-serif;transform:scaleX(0.9518);">1st Floor Plan_V2</div>
<svg class="a" style="left:1111px;top:235px;" width="9" height="23" viewBox="0 0 9 23"><path d="M8.5,0 L0.5,23" stroke="#5a6170" stroke-width="1.3"/></svg>
<div class="t" style="left:1134.5px;top:238.76px;font-size:18px;line-height:18px;color:#e6e8ec;font-family:'Liberation Sans',sans-serif;transform:scaleX(0.9673);">AutoCAD_LoftBed_Drawings_Torpedo</div>
<svg class="a" style="left:1463px;top:235px;" width="9" height="23" viewBox="0 0 9 23"><path d="M8.5,0 L0.5,23" stroke="#5a6170" stroke-width="1.3"/></svg>
<div class="t" style="left:1484.5px;top:238.76px;font-size:18px;line-height:18px;color:#e6e8ec;font-family:'Liberation Sans',sans-serif;transform:scaleX(0.8985);">ROBOT_FINISHED_18*</div>
<svg class="a" style="left:1694px;top:235px;" width="9" height="23" viewBox="0 0 9 23"><path d="M8.5,0 L0.5,23" stroke="#5a6170" stroke-width="1.3"/></svg>
<svg class="a" style="left:1716px;top:238px;" width="19" height="19" viewBox="0 0 19 19"><path d="M9.5,0 V19 M0,9.5 H19" stroke="#e6e8ec" stroke-width="2.6"/></svg>
<svg class="a" style="left:1752px;top:235px;" width="9" height="23" viewBox="0 0 9 23"><path d="M8.5,0 L0.5,23" stroke="#5a6170" stroke-width="1.3"/></svg>
<!-- p50_palettes -->
<div class="a" style="left:43px;top:271px;width:1869px;height:1px;background:#aeb2b8;"></div>
<div class="a" style="left:37px;top:272px;width:544px;height:692px;background:#1f242c;border-radius:4px;"></div>
<div class="a" style="left:41px;top:278px;width:536px;height:682px;background:#3b4453;border-radius:5px;"></div>
<div class="a" style="left:43px;top:809px;width:37px;height:153px;background:#2b313b;"></div>
<div class="a" style="left:97px;top:700px;width:462px;height:183px;background:#3b4453;border:2px solid #1f242c;"></div>
<div class="a" style="left:366px;top:351px;width:195px;height:35px;background:#2b313b;border-radius:3px;"></div>
<svg class="a" style="left:509px;top:359px;" width="17" height="16" viewBox="0 0 17 16"><rect x="0" y="1" width="3" height="3" fill="#eee"/><rect x="5" y="1.5" width="12" height="2" fill="#eee"/><rect x="0" y="7" width="3" height="3" fill="#eee"/><rect x="5" y="7.5" width="12" height="2" fill="#eee"/><rect x="0" y="13" width="3" height="3" fill="#eee"/><rect x="5" y="13.5" width="12" height="2" fill="#eee"/></svg>
<svg class="a" style="left:536px;top:359px;" width="16" height="16" viewBox="0 0 16 16"><rect x="0" y="0" width="7" height="3" fill="#eee"/><path d="M3,3 V14 H6 M3,8 H6" stroke="#eee" stroke-width="1.2" fill="none"/><rect x="6" y="6" width="10" height="3" fill="#eee"/><rect x="6" y="12" width="10" height="3" fill="#eee"/></svg>
<div class="a" style="left:368px;top:386px;width:192px;height:31px;background:#48526a;"></div>
<div class="a" style="left:376px;top:386px;width:1px;height:31px;background:#2b313b;"></div>
<div class="a" style="left:465px;top:386px;width:2px;height:31px;background:#2b313b;"></div>
<div class="t" style="left:385.1px;top:393.56px;font-size:18px;line-height:18px;color:#e6e8ec;font-family:'Liberation Sans',sans-serif;transform:scaleX(0.9333);">Size</div>
<div class="t" style="left:476.3px;top:393.56px;font-size:18px;line-height:18px;color:#e6e8ec;font-family:'Liberation Sans',sans-serif;transform:scaleX(0.9263);">Type</div>
<div class="t" style="left:379.5px;top:423.26px;font-size:18px;line-height:18px;color:#efe9dc;font-family:'Liberation Sans',sans-serif;transform:scaleX(0.9738);">1.12 MB</div>
<div class="t" style="left:467.3px;top:423.26px;font-size:18px;line-height:18px;color:#efe9dc;font-family:'Liberation Sans',sans-serif;transform:scaleX(0.9780);">Current</div>
<div class="a" style="left:559px;top:386px;width:2px;height:291px;background:#1f242c;"></div>
<div class="a" style="left:369px;top:635px;width:190px;height:26px;background:#efefef;"></div>
<svg class="a" style="left:539px;top:641px;" width="9" height="13" viewBox="0 0 9 13"><path d="M1.5,1.5 L7,6.5 L1.5,11.5" stroke="#444" stroke-width="2" fill="none"/></svg>
<div class="a" style="left:368px;top:664px;width:193px;height:7px;background:#2b313b;"></div>
<div class="a" style="left:368px;top:677px;width:193px;height:32px;background:#2b313b;border-radius:3px;"></div>
<svg class="a" style="left:476px;top:682px;" width="18" height="19" viewBox="0 0 18 19"><path d="M0,0 H9 L13,4 V19 H0Z" fill="#e8e8e8"/><path d="M9,0 L13,4 H9Z" fill="#fff"/><rect x="7" y="12" width="11" height="3" fill="#6cc4f4"/></svg>
<svg class="a" style="left:502px;top:682px;" width="20" height="19" viewBox="0 0 20 19"><rect x="0" y="0" width="20" height="19" fill="#5aa8e0"/><path d="M0,19 L7,10 L12,15 L15,12 L20,17 V19Z" fill="#2c6fae"/><circle cx="14" cy="6" r="2.5" fill="#f6e8a0"/></svg>
<svg class="a" style="left:537px;top:688px;" width="13" height="7" viewBox="0 0 13 7"><path d="M0,0 H13 L6.5,7Z" fill="#e8e8e8"/></svg>
<svg class="a" style="left:50px;top:935px;" width="24" height="25" viewBox="0 0 24 25"><rect x="0" y="5" width="24" height="20" fill="#d8d8d8"/><rect x="7" y="0" width="10" height="7" fill="#d8d8d8"/><rect x="9" y="2" width="6" height="3" fill="#444"/></svg>
<div class="a" style="left:2px;top:809px;width:41px;height:155px;background:#232933;"></div>
<div class="a" style="left:2px;top:272px;width:337px;height:540px;background:#1f242c;border-radius:0 0 4px 0;"></div>
<div class="a" style="left:2px;top:272px;width:34px;height:539px;background:#2b313b;"></div>
<div class="a" style="left:37px;top:280px;width:297px;height:527px;background:#3b4453;border-radius:6px 0 4px 6px;"></div>
<div class="a" style="left:332px;top:280px;width:36px;height:165px;background:#3b4453;border-radius:0 6px 6px 0;border-right:1px solid #1f242c;"></div>
<div class="a" style="left:334px;top:446px;width:34px;height:167px;background:#2e3440;border-radius:0 5px 5px 0;"></div>
<div class="a" style="left:334px;top:614px;width:34px;height:167px;background:#2e3440;border-radius:0 5px 5px 0;"></div>
<div class="a" style="left:54px;top:296px;width:82px;height:33px;background:#4b5466;border:1px solid #2f3540;"></div>
<div class="t" style="left:58.8px;top:305.26px;font-size:18px;line-height:18px;color:#e6e8ec;font-family:'Liberation Sans',sans-serif;transform:scaleX(0.9600);">Ne...</div>
<svg class="a" style="left:116px;top:309px;" width="17" height="10" viewBox="0 0 17 10"><path d="M0,0 H17 L8.5,10Z" fill="#dcdcdc"/></svg>
<svg class="a" style="left:149px;top:302px;" width="25" height="25" viewBox="0 0 25 25"><path d="M0,3 L3,0 V20 L0,23Z" fill="#f08fa0"/><path d="M3,0 H14 V6 H25 V25 H3Z" fill="#fff"/><rect x="1" y="14" width="24" height="11" fill="#a01830"/><text x="13" y="23.5" font-family="Liberation Sans" font-weight="bold" font-size="8.5" fill="#fff" text-anchor="middle">DWF</text></svg>
<svg class="a" style="left:182px;top:311px;" width="16" height="9" viewBox="0 0 16 9"><path d="M0,0 H16 L8,9Z" fill="#dcdcdc"/></svg>
<svg class="a" style="left:207px;top:301px;" width="25" height="26" viewBox="0 0 25 26"><rect x="5" y="0" width="14" height="6" fill="#eee"/><rect x="0" y="5" width="22" height="11" fill="#dcdcdc"/><rect x="4" y="14" width="14" height="6" fill="#eee"/><path d="M10,20 H18 V17 L24,21.5 L18,26 V23 H10Z" fill="#6cc4f4"/></svg>
<svg class="a" style="left:241px;top:311px;" width="16" height="9" viewBox="0 0 16 9"><path d="M0,0 H16 L8,9Z" fill="#dcdcdc"/></svg>
<svg class="a" style="left:268px;top:301px;" width="22" height="26" viewBox="0 0 22 26"><rect x="8" y="1" width="14" height="10" fill="#e6e6e6"/><rect x="11" y="3" width="8" height="3" fill="#555"/><rect x="8" y="13" width="14" height="10" fill="#e6e6e6"/><rect x="11" y="15" width="8" height="3" fill="#555"/><path d="M3,0 V25 M3,5 H8 M3,18 H8" stroke="#ccc" stroke-width="1" stroke-dasharray="1.5,1.5"/><rect x="0" y="0" width="5" height="4" fill="#ddd"/></svg>
<svg class="a" style="left:300px;top:311px;" width="16" height="9" viewBox="0 0 16 9"><path d="M0,0 H16 L8,9Z" fill="#dcdcdc"/></svg>
<div class="a" style="left:53px;top:340px;width:265px;height:35px;background:#2b313b;border-radius:3px 3px 0 0;"></div>
<div class="t" style="left:66.2px;top:347.46px;font-size:18px;line-height:18px;color:#f4f6f8;font-family:'Liberation Sans',sans-serif;transform:scaleX(0.9702);font-weight:bold;">Sheets</div>
<svg class="a" style="left:292px;top:348px;" width="18" height="17" viewBox="0 0 18 17"><path d="M15,6 A7,7 0 0 0 3,5" stroke="#e6e6e6" stroke-width="2.2" fill="none"/><path d="M16,1 V8 H9Z" fill="#e6e6e6"/><path d="M3,11 A7,7 0 0 0 15,12" stroke="#e6e6e6" stroke-width="2.2" fill="none"/><path d="M2,16 V9 H9Z" fill="#e6e6e6"/></svg>
<div class="a" style="left:53px;top:374px;width:265px;height:414px;background:#3b4453;border:2px solid #1f242c;border-top:0;"></div>
<div class="a" style="left:111px;top:571px;width:205px;height:55px;background:#6b7f9e;"></div>
<svg class="a" style="left:56px;top:377px;" width="26" height="26" viewBox="0 0 26 26"><g transform="scale(0.49)"><path d="M26,9 L39,41" stroke="#dedede" stroke-width="18" stroke-linecap="round"/><path d="M1,10 H17 L39,50 H1Z" fill="#dedede"/><path d="M16.5,9 L33,43" stroke="#333" stroke-width="2"/><circle cx="38.5" cy="41.5" r="5.5" fill="none" stroke="#333" stroke-width="2"/></g></svg>
<div class="t" style="left:85.7px;top:381.06px;font-size:18px;line-height:18px;color:#e6e8ec;font-family:'Liberation Sans',sans-serif;transform:scaleX(0.9531);">New Sheet Set (1)</div>
<div class="a" style="left:69px;top:403px;width:1px;height:211px;background:transparent;border-left:1px dotted #c8c8c8;"></div>
<div class="a" style="left:70px;top:417px;width:14px;height:1px;background:transparent;border-top:1px dotted #c8c8c8;"></div>
<svg class="a" style="left:84px;top:403px;" width="25" height="26" viewBox="0 0 25 26"><rect x="0" y="0" width="21" height="21" fill="#ececec"/><rect x="2.5" y="2.5" width="16" height="16" fill="#cfcfcf"/><path d="M9,3 V14 M13.5,3 V14 M4,8 H18 M4,12.5 H18" stroke="#777" stroke-width="1"/><path d="M4,4 V18 H16Z" fill="#1a1a1a"/><path d="M6,14 V16 H8Z" fill="#ddd"/><path d="M15,17 V13 A3.5,3.5 0 0 1 22,13 V17" stroke="#3a3010" stroke-width="3" fill="none"/><path d="M15,17 V13 A3.5,3.5 0 0 1 22,13 V17" stroke="#f0d080" stroke-width="1.4" fill="none"/><rect x="12.5" y="16.5" width="12" height="9" fill="#f2cf6e" stroke="#3a3010" stroke-width="0.8"/><rect x="18" y="18.5" width="1.4" height="5" fill="#222"/></svg>
<div class="a" style="left:70px;top:445px;width:14px;height:1px;background:transparent;border-top:1px dotted #c8c8c8;"></div>
<svg class="a" style="left:84px;top:431px;" width="25" height="26" viewBox="0 0 25 26"><rect x="0" y="0" width="21" height="21" fill="#ececec"/><rect x="2.5" y="2.5" width="16" height="16" fill="#cfcfcf"/><path d="M9,3 V14 M13.5,3 V14 M4,8 H18 M4,12.5 H18" stroke="#777" stroke-width="1"/><path d="M4,4 V18 H16Z" fill="#1a1a1a"/><path d="M6,14 V16 H8Z" fill="#ddd"/><path d="M15,17 V13 A3.5,3.5 0 0 1 22,13 V17" stroke="#3a3010" stroke-width="3" fill="none"/><path d="M15,17 V13 A3.5,3.5 0 0 1 22,13 V17" stroke="#f0d080" stroke-width="1.4" fill="none"/><rect x="12.5" y="16.5" width="12" height="9" fill="#f2cf6e" stroke="#3a3010" stroke-width="0.8"/><rect x="18" y="18.5" width="1.4" height="5" fill="#222"/></svg>
<div class="a" style="left:70px;top:473px;width:14px;height:1px;background:transparent;border-top:1px dotted #c8c8c8;"></div>
<svg class="a" style="left:84px;top:459px;" width="25" height="26" viewBox="0 0 25 26"><rect x="0" y="0" width="21" height="21" fill="#ececec"/><rect x="2.5" y="2.5" width="16" height="16" fill="#cfcfcf"/><path d="M9,3 V14 M13.5,3 V14 M4,8 H18 M4,12.5 H18" stroke="#777" stroke-width="1"/><path d="M4,4 V18 H16Z" fill="#1a1a1a"/><path d="M6,14 V16 H8Z" fill="#ddd"/><path d="M15,17 V13 A3.5,3.5 0 0 1 22,13 V17" stroke="#3a3010" stroke-width="3" fill="none"/><path d="M15,17 V13 A3.5,3.5 0 0 1 22,13 V17" stroke="#f0d080" stroke-width="1.4" fill="none"/><rect x="12.5" y="16.5" width="12" height="9" fill="#f2cf6e" stroke="#3a3010" stroke-width="0.8"/><rect x="18" y="18.5" width="1.4" height="5" fill="#222"/></svg>
<div class="a" style="left:70px;top:501px;width:14px;height:1px;background:transparent;border-top:1px dotted #c8c8c8;"></div>
<svg class="a" style="left:84px;top:487px;" width="25" height="26" viewBox="0 0 25 26"><rect x="0" y="0" width="21" height="21" fill="#ececec"/><rect x="2.5" y="2.5" width="16" height="16" fill="#cfcfcf"/><path d="M9,3 V14 M13.5,3 V14 M4,8 H18 M4,12.5 H18" stroke="#777" stroke-width="1"/><path d="M4,4 V18 H16Z" fill="#1a1a1a"/><path d="M6,14 V16 H8Z" fill="#ddd"/><path d="M15,17 V13 A3.5,3.5 0 0 1 22,13 V17" stroke="#3a3010" stroke-width="3" fill="none"/><path d="M15,17 V13 A3.5,3.5 0 0 1 22,13 V17" stroke="#f0d080" stroke-width="1.4" fill="none"/><rect x="12.5" y="16.5" width="12" height="9" fill="#f2cf6e" stroke="#3a3010" stroke-width="0.8"/><rect x="18" y="18.5" width="1.4" height="5" fill="#222"/></svg>
<div class="a" style="left:70px;top:529px;width:14px;height:1px;background:transparent;border-top:1px dotted #c8c8c8;"></div>
<svg class="a" style="left:84px;top:515px;" width="25" height="26" viewBox="0 0 25 26"><rect x="0" y="0" width="21" height="21" fill="#ececec"/><rect x="2.5" y="2.5" width="16" height="16" fill="#cfcfcf"/><path d="M9,3 V14 M13.5,3 V14 M4,8 H18 M4,12.5 H18" stroke="#777" stroke-width="1"/><path d="M4,4 V18 H16Z" fill="#1a1a1a"/><path d="M6,14 V16 H8Z" fill="#ddd"/><path d="M15,17 V13 A3.5,3.5 0 0 1 22,13 V17" stroke="#3a3010" stroke-width="3" fill="none"/><path d="M15,17 V13 A3.5,3.5 0 0 1 22,13 V17" stroke="#f0d080" stroke-width="1.4" fill="none"/><rect x="12.5" y="16.5" width="12" height="9" fill="#f2cf6e" stroke="#3a3010" stroke-width="0.8"/><rect x="18" y="18.5" width="1.4" height="5" fill="#222"/></svg>
<div class="a" style="left:70px;top:557px;width:14px;height:1px;background:transparent;border-top:1px dotted #c8c8c8;"></div>
<svg class="a" style="left:84px;top:543px;" width="25" height="26" viewBox="0 0 25 26"><rect x="0" y="0" width="21" height="21" fill="#ececec"/><rect x="2.5" y="2.5" width="16" height="16" fill="#cfcfcf"/><path d="M9,3 V14 M13.5,3 V14 M4,8 H18 M4,12.5 H18" stroke="#777" stroke-width="1"/><path d="M4,4 V18 H16Z" fill="#1a1a1a"/><path d="M6,14 V16 H8Z" fill="#ddd"/><path d="M15,17 V13 A3.5,3.5 0 0 1 22,13 V17" stroke="#3a3010" stroke-width="3" fill="none"/><path d="M15,17 V13 A3.5,3.5 0 0 1 22,13 V17" stroke="#f0d080" stroke-width="1.4" fill="none"/><rect x="12.5" y="16.5" width="12" height="9" fill="#f2cf6e" stroke="#3a3010" stroke-width="0.8"/><rect x="18" y="18.5" width="1.4" height="5" fill="#222"/></svg>
<div class="a" style="left:70px;top:585px;width:14px;height:1px;background:transparent;border-top:1px dotted #c8c8c8;"></div>
<svg class="a" style="left:84px;top:571px;" width="25" height="26" viewBox="0 0 25 26"><rect x="0" y="0" width="21" height="21" fill="#ececec"/><rect x="2.5" y="2.5" width="16" height="16" fill="#cfcfcf"/><path d="M9,3 V14 M13.5,3 V14 M4,8 H18 M4,12.5 H18" stroke="#777" stroke-width="1"/><path d="M4,4 V18 H16Z" fill="#1a1a1a"/><path d="M6,14 V16 H8Z" fill="#ddd"/><path d="M15,17 V13 A3.5,3.5 0 0 1 22,13 V17" stroke="#3a3010" stroke-width="3" fill="none"/><path d="M15,17 V13 A3.5,3.5 0 0 1 22,13 V17" stroke="#f0d080" stroke-width="1.4" fill="none"/><rect x="12.5" y="16.5" width="12" height="9" fill="#f2cf6e" stroke="#3a3010" stroke-width="0.8"/><rect x="18" y="18.5" width="1.4" height="5" fill="#222"/></svg>
<div class="a" style="left:70px;top:613px;width:14px;height:1px;background:transparent;border-top:1px dotted #c8c8c8;"></div>
<svg class="a" style="left:84px;top:599px;" width="25" height="26" viewBox="0 0 25 26"><rect x="0" y="0" width="21" height="21" fill="#ececec"/><rect x="2.5" y="2.5" width="16" height="16" fill="#cfcfcf"/><path d="M9,3 V14 M13.5,3 V14 M4,8 H18 M4,12.5 H18" stroke="#777" stroke-width="1"/><path d="M4,4 V18 H16Z" fill="#1a1a1a"/><path d="M6,14 V16 H8Z" fill="#ddd"/><path d="M15,17 V13 A3.5,3.5 0 0 1 22,13 V17" stroke="#3a3010" stroke-width="3" fill="none"/><path d="M15,17 V13 A3.5,3.5 0 0 1 22,13 V17" stroke="#f0d080" stroke-width="1.4" fill="none"/><rect x="12.5" y="16.5" width="12" height="9" fill="#f2cf6e" stroke="#3a3010" stroke-width="0.8"/><rect x="18" y="18.5" width="1.4" height="5" fill="#222"/></svg>
<div class="a" style="left:53px;top:374px;width:263px;height:300px;overflow:hidden"><div class="t" style="left:58.9px;top:35.16px;font-size:18px;line-height:18px;color:#e6e8ec;font-family:'Liberation Sans',sans-serif;transform:scaleX(0.9126);">1 - BLVD OFFICE_ELEVATION</div>
<div class="t" style="left:58.9px;top:63.16px;font-size:18px;line-height:18px;color:#e6e8ec;font-family:'Liberation Sans',sans-serif;transform:scaleX(0.9125);">2 - BLVD OFFICE_PLAN-AUTOCAD</div>
<div class="t" style="left:58.9px;top:91.16px;font-size:18px;line-height:18px;color:#e6e8ec;font-family:'Liberation Sans',sans-serif;transform:scaleX(0.9125);">3 - BLVD OFFICE_PLAN-AUTOCAD</div>
<div class="t" style="left:59.8px;top:119.16px;font-size:18px;line-height:18px;color:#e6e8ec;font-family:'Liberation Sans',sans-serif;transform:scaleX(0.9056);">4 - 1st Floor Plan_V2 - Floor</div>
<div class="t" style="left:58.9px;top:147.16px;font-size:18px;line-height:18px;color:#e6e8ec;font-family:'Liberation Sans',sans-serif;transform:scaleX(0.9128);">5 - AutoCAD_LoftBed_Drawings</div>
<div class="t" style="left:58.9px;top:175.16px;font-size:18px;line-height:18px;color:#e6e8ec;font-family:'Liberation Sans',sans-serif;transform:scaleX(0.9128);">6 - AutoCAD_LoftBed_Drawings</div>
<div class="t" style="left:58.9px;top:203.16px;font-size:18px;line-height:18px;color:#f0f2f6;font-family:'Liberation Sans',sans-serif;transform:scaleX(0.9091);">7 - ROBOT_FINISHED_18 - A</div>
<div class="t" style="left:58.9px;top:231.16px;font-size:18px;line-height:18px;color:#f0f2f6;font-family:'Liberation Sans',sans-serif;transform:scaleX(0.9091);">8 - ROBOT_FINISHED_18 - A</div>
</div>
<div class="t" style="left:342px;top:399px;font-size:18px;line-height:18px;color:#e6e8ec;transform:rotate(-90deg) scaleX(0.9613);transform-origin:0 0">Sheet List</div>
<div class="t" style="left:342px;top:576px;font-size:18px;line-height:18px;color:#e6e8ec;transform:rotate(-90deg) scaleX(0.9419);transform-origin:0 0">Sheet Views</div>
<div class="t" style="left:342px;top:746px;font-size:18px;line-height:18px;color:#e6e8ec;transform:rotate(-90deg) scaleX(1.0026);transform-origin:0 0">Model Views</div>
<div class="t" style="left:10px;top:769px;font-size:19px;line-height:19px;color:#d8dbe0;transform:rotate(-90deg) scaleX(0.8429);transform-origin:0 0">SHEET SET MANAGER</div>
<div class="t" style="left:54px;top:919px;font-size:19px;line-height:19px;color:#d8dbe0;transform:rotate(-90deg) scaleX(0.7984);transform-origin:0 0">EXTERNAL RE</div>
<svg class="a" style="left:11px;top:283px;" width="14" height="14" viewBox="0 0 14 14"><path d="M1.5,1.5 L12.5,12.5 M12.5,1.5 L1.5,12.5" stroke="#d6d6d6" stroke-width="3"/></svg>
<svg class="a" style="left:11px;top:312px;" width="14" height="15" viewBox="0 0 14 15"><rect x="0" y="0" width="2" height="15" fill="#d6d6d6"/><path d="M3,7.5 L13,1 V14Z" fill="#d6d6d6"/></svg>
<svg class="a" style="left:11px;top:340px;" width="15" height="16" viewBox="0 0 15 16"><path d="M7.5,0 V16 M0,8 H15 M2,2 L13,14 M13,2 L2,14" stroke="#d6d6d6" stroke-width="3"/><circle cx="7.5" cy="8" r="3" fill="#2b313b"/></svg>
<svg class="a" style="left:5px;top:782px;" width="26" height="26" viewBox="0 0 26 26"><g transform="scale(0.49)"><path d="M26,9 L39,41" stroke="#dedede" stroke-width="18" stroke-linecap="round"/><path d="M1,10 H17 L39,50 H1Z" fill="#dedede"/><path d="M16.5,9 L33,43" stroke="#333" stroke-width="2"/><circle cx="38.5" cy="41.5" r="5.5" fill="none" stroke="#333" stroke-width="2"/></g></svg>
<!-- p70_status -->
<div class="a" style="left:43px;top:965px;width:377px;height:1px;background:#9aa0a8;"></div>
<svg class="a" style="left:105px;top:972px;" width="119" height="35" viewBox="0 0 119 35"><path d="M14,0 H119 L105,35 H0Z" fill="#3b4453"/></svg>
<svg class="a" style="left:18px;top:979px;" width="10" height="22" viewBox="0 0 10 22"><path d="M9,0 L1,22" stroke="#5a6170" stroke-width="1.3"/></svg>
<div class="t" style="left:41.9px;top:982.56px;font-size:18px;line-height:18px;color:#e6e8ec;font-family:'Liberation Sans',sans-serif;transform:scaleX(1.0787);">Model</div>
<div class="t" style="left:129.0px;top:982.76px;font-size:18px;line-height:18px;color:#f4f6f8;font-family:'Liberation Sans',sans-serif;transform:scaleX(0.9853);font-weight:bold;">Layout1</div>
<div class="t" style="left:232.4px;top:982.76px;font-size:18px;line-height:18px;color:#e6e8ec;font-family:'Liberation Sans',sans-serif;transform:scaleX(1.0065);">Layout2</div>
<svg class="a" style="left:312px;top:979px;" width="10" height="22" viewBox="0 0 10 22"><path d="M9,0 L1,22" stroke="#5a6170" stroke-width="1.3"/></svg>
<svg class="a" style="left:335px;top:981px;" width="19" height="19" viewBox="0 0 19 19"><path d="M9.5,0 V19 M0,9.5 H19" stroke="#e6e8ec" stroke-width="2.6"/></svg>
<svg class="a" style="left:371px;top:979px;" width="10" height="22" viewBox="0 0 10 22"><path d="M9,0 L1,22" stroke="#5a6170" stroke-width="1.3"/></svg>
<div class="a" style="left:1204px;top:976px;width:63px;height:36px;background:#3b4453;"></div>
<div class="a" style="left:1273px;top:976px;width:155px;height:36px;background:#3b4453;"></div>
<div class="a" style="left:1432px;top:976px;width:94px;height:36px;background:#3b4453;"></div>
<div class="a" style="left:1533px;top:976px;width:108px;height:36px;background:#3b4453;"></div>
<div class="a" style="left:1647px;top:976px;width:59px;height:36px;background:#3b4453;"></div>
<div class="a" style="left:1709px;top:976px;width:35px;height:36px;background:#3b4453;"></div>
<div class="a" style="left:1751px;top:976px;width:34px;height:36px;background:#3b4453;"></div>
<div class="a" style="left:1792px;top:976px;width:43px;height:36px;background:#3b4453;"></div>
<div class="a" style="left:1840px;top:976px;width:71px;height:36px;background:#3b4453;"></div>
<div class="t" style="left:1209.2px;top:985.42px;font-size:19px;line-height:19px;color:#f4f6f8;font-family:'Liberation Sans',sans-serif;transform:scaleX(0.8306);font-weight:bold;">PAPER</div>
<div class="a" style="left:1310px;top:976px;width:34px;height:36px;background:#5a8dc6;"></div>
<div class="a" style="left:1432px;top:976px;width:34px;height:36px;background:#5a8dc6;"></div>
<div class="a" style="left:1469px;top:976px;width:33px;height:36px;background:#5a8dc6;"></div>
<svg class="a" style="left:1279px;top:982px;" width="23" height="23" viewBox="0 0 23 23"><path d="M1,0 V22 H23 M1,15 H8 V22" stroke="#e4e4e4" stroke-width="1.6" fill="none"/></svg>
<svg class="a" style="left:1313px;top:982px;" width="27" height="24" viewBox="0 0 27 24"><circle cx="12" cy="13" r="9.5" stroke="#e4e4e4" stroke-width="1.8" fill="none"/><path d="M6,13 H26 M12,13 L22,1" stroke="#e4e4e4" stroke-width="1.8"/></svg>
<svg class="a" style="left:1351px;top:992px;" width="12" height="6" viewBox="0 0 12 6"><path d="M0,0 H12 L6,6Z" fill="#e4e4e4"/></svg>
<svg class="a" style="left:1377px;top:982px;" width="19" height="24" viewBox="0 0 19 24"><path d="M1,1 L18,23" stroke="#e05050" stroke-width="1.6"/><path d="M9.5,0 V24" stroke="#40c040" stroke-width="1.6"/><rect x="7.5" y="10" width="4" height="4" fill="none" stroke="#eee" stroke-width="1"/></svg>
<svg class="a" style="left:1411px;top:992px;" width="12" height="6" viewBox="0 0 12 6"><path d="M0,0 H12 L6,6Z" fill="#e4e4e4"/></svg>
<svg class="a" style="left:1436px;top:984px;" width="26" height="20" viewBox="0 0 26 20"><path d="M1,19 H25 M1,19 L22,3" stroke="#f0f0f0" stroke-width="1.8"/><rect x="10" y="10" width="5" height="5" fill="#f0f0f0"/></svg>
<svg class="a" style="left:1474px;top:981px;" width="24" height="27" viewBox="0 0 24 27"><rect x="5" y="7" width="18" height="19" stroke="#f0f0f0" stroke-width="1.8" fill="none"/><rect x="1" y="1" width="7" height="7" stroke="#f0f0f0" stroke-width="1.5" fill="#5a8dc6"/></svg>
<svg class="a" style="left:1509px;top:992px;" width="12" height="6" viewBox="0 0 12 6"><path d="M0,0 H12 L6,6Z" fill="#e4e4e4"/></svg>
<svg class="a" style="left:1538px;top:982px;" width="25" height="25" viewBox="0 0 25 25"><path d="M1,1 H24 V24 H1Z" stroke="#e4e4e4" stroke-width="1.6" stroke-dasharray="3,2" fill="none"/><rect x="6" y="6" width="13" height="13" stroke="#e4e4e4" stroke-width="1.6" fill="none"/><path d="M1,1 L6,6 M24,1 L19,6 M1,24 L6,19 M24,24 L19,19" stroke="#e4e4e4" stroke-width="1.4"/></svg>
<svg class="a" style="left:1575px;top:982px;" width="26" height="24" viewBox="0 0 26 24"><path d="M1,24 L10,2 L19,24 L10,17Z" fill="#e4e4e4"/><circle cx="21" cy="6" r="4.5" stroke="#e4e4e4" stroke-width="1.6" fill="none"/></svg>
<svg class="a" style="left:1610px;top:982px;" width="26" height="24" viewBox="0 0 26 24"><path d="M1,24 L10,2 L19,24 L10,17Z" fill="#e4e4e4"/><path d="M20,0 L17,7 H21 L18,13" stroke="#e4e4e4" stroke-width="1.6" fill="none"/></svg>
<svg class="a" style="left:1652px;top:982px;" width="25" height="25" viewBox="0 0 25 25"><circle cx="12.5" cy="12.5" r="8" fill="#e4e4e4"/><circle cx="12.5" cy="12.5" r="3.5" fill="#3b4453"/><path d="M12.5,0 V25 M0,12.5 H25 M3.5,3.5 L21.5,21.5 M21.5,3.5 L3.5,21.5" stroke="#e4e4e4" stroke-width="4"/><circle cx="12.5" cy="12.5" r="3.5" fill="#3b4453"/></svg>
<svg class="a" style="left:1689px;top:992px;" width="12" height="6" viewBox="0 0 12 6"><path d="M0,0 H12 L6,6Z" fill="#e4e4e4"/></svg>
<svg class="a" style="left:1715px;top:982px;" width="23" height="23" viewBox="0 0 23 23"><path d="M11.5,0 V23 M0,11.5 H23" stroke="#e4e4e4" stroke-width="2.6"/></svg>
<svg class="a" style="left:1756px;top:982px;" width="25" height="25" viewBox="0 0 25 25"><rect x="1" y="1" width="10" height="10" stroke="#e4e4e4" stroke-width="1.5" fill="none"/><circle cx="19" cy="9" r="5" stroke="#e4e4e4" stroke-width="1.5" fill="none"/><path d="M8,14 L14,24 H2Z" stroke="#e4e4e4" stroke-width="1.5" fill="none"/></svg>
<svg class="a" style="left:1795px;top:977px;" width="38" height="34" viewBox="0 0 38 34"><path d="M6,2 H26 L34,10 V28 H6Z" fill="#5a9ad8"/><path d="M6,18 V30 H22 L30,22" fill="#f2c14e"/><rect x="6" y="18" width="18" height="12" fill="#f2c14e"/><path d="M14,4 V18 M8,10 H22" stroke="#fff" stroke-width="1.4"/><path d="M20,24 L26,31 L37,17" stroke="#3ab54a" stroke-width="3.5" fill="none"/></svg>
<svg class="a" style="left:1846px;top:982px;" width="25" height="23" viewBox="0 0 25 23"><rect x="1" y="1" width="23" height="21" stroke="#e4e4e4" stroke-width="1.5" fill="none"/><path d="M5,17 L11,11 M5,17 V13 M5,17 H9 M20,6 L14,12 M20,6 V10 M20,6 H16" stroke="#e4e4e4" stroke-width="1.5"/></svg>
<svg class="a" style="left:1882px;top:983px;" width="24" height="22" viewBox="0 0 24 22"><rect x="0" y="0" width="24" height="3" fill="#e4e4e4"/><rect x="0" y="9" width="24" height="3" fill="#e4e4e4"/><rect x="0" y="18" width="24" height="3" fill="#e4e4e4"/></svg>
<div class="a" style="left:418px;top:927px;width:94px;height:37px;background:#262c36;border-radius:4px 0 0 4px;opacity:0.92;"></div>
<div class="a" style="left:430px;top:933px;width:2px;height:26px;background:transparent;border-left:2px dotted #d8d8d8;"></div>
<svg class="a" style="left:443px;top:940px;" width="14" height="13" viewBox="0 0 14 13"><path d="M1,1 L13,12 M13,1 L1,12" stroke="#b8bcc4" stroke-width="2.4"/></svg>
<svg class="a" style="left:475px;top:934px;" width="23" height="23" viewBox="0 0 23 23"><path d="M2,21 L12,11" stroke="#b8bcc4" stroke-width="3.2" stroke-linecap="round"/><path d="M12,11 A6,6 0 0 1 20,2 L16,6 L18,9 L22,5 A6,6 0 0 1 13,12Z" fill="#b8bcc4"/></svg>
<div class="a" style="left:506px;top:928px;width:1031px;height:36px;background:rgba(226,226,226,0.97);border-radius:4px;border:1px solid #6b7078;"></div>
<div class="a" style="left:506px;top:928px;width:76px;height:36px;background:rgba(59,68,83,0.16);border-radius:4px 0 0 4px;"></div>
<svg class="a" style="left:512px;top:938px;" width="25" height="19" viewBox="0 0 25 19"><rect x="0.75" y="0.75" width="23.5" height="17.5" stroke="#555" stroke-width="1.5" fill="none"/><rect x="0" y="0" width="25" height="4" fill="#555"/><path d="M3,8 L8,10 L3,12 M8,14 H13" stroke="#555" stroke-width="1.2" fill="none"/></svg>
<svg class="a" style="left:539px;top:943px;" width="12" height="7" viewBox="0 0 12 7"><path d="M0,0 H12 L6,7Z" fill="#555"/></svg>
<div class="t" style="left:559.6px;top:936.76px;font-size:18px;line-height:18px;color:#7a7a7a;font-family:'Liberation Mono',monospace;transform:scaleX(1.0221);font-style:italic;">Type a command</div>
<svg class="a" style="left:1519px;top:943px;" width="13" height="7" viewBox="0 0 13 7"><path d="M0,7 H13 L6.5,0Z" fill="#555"/></svg>
</body></html>
